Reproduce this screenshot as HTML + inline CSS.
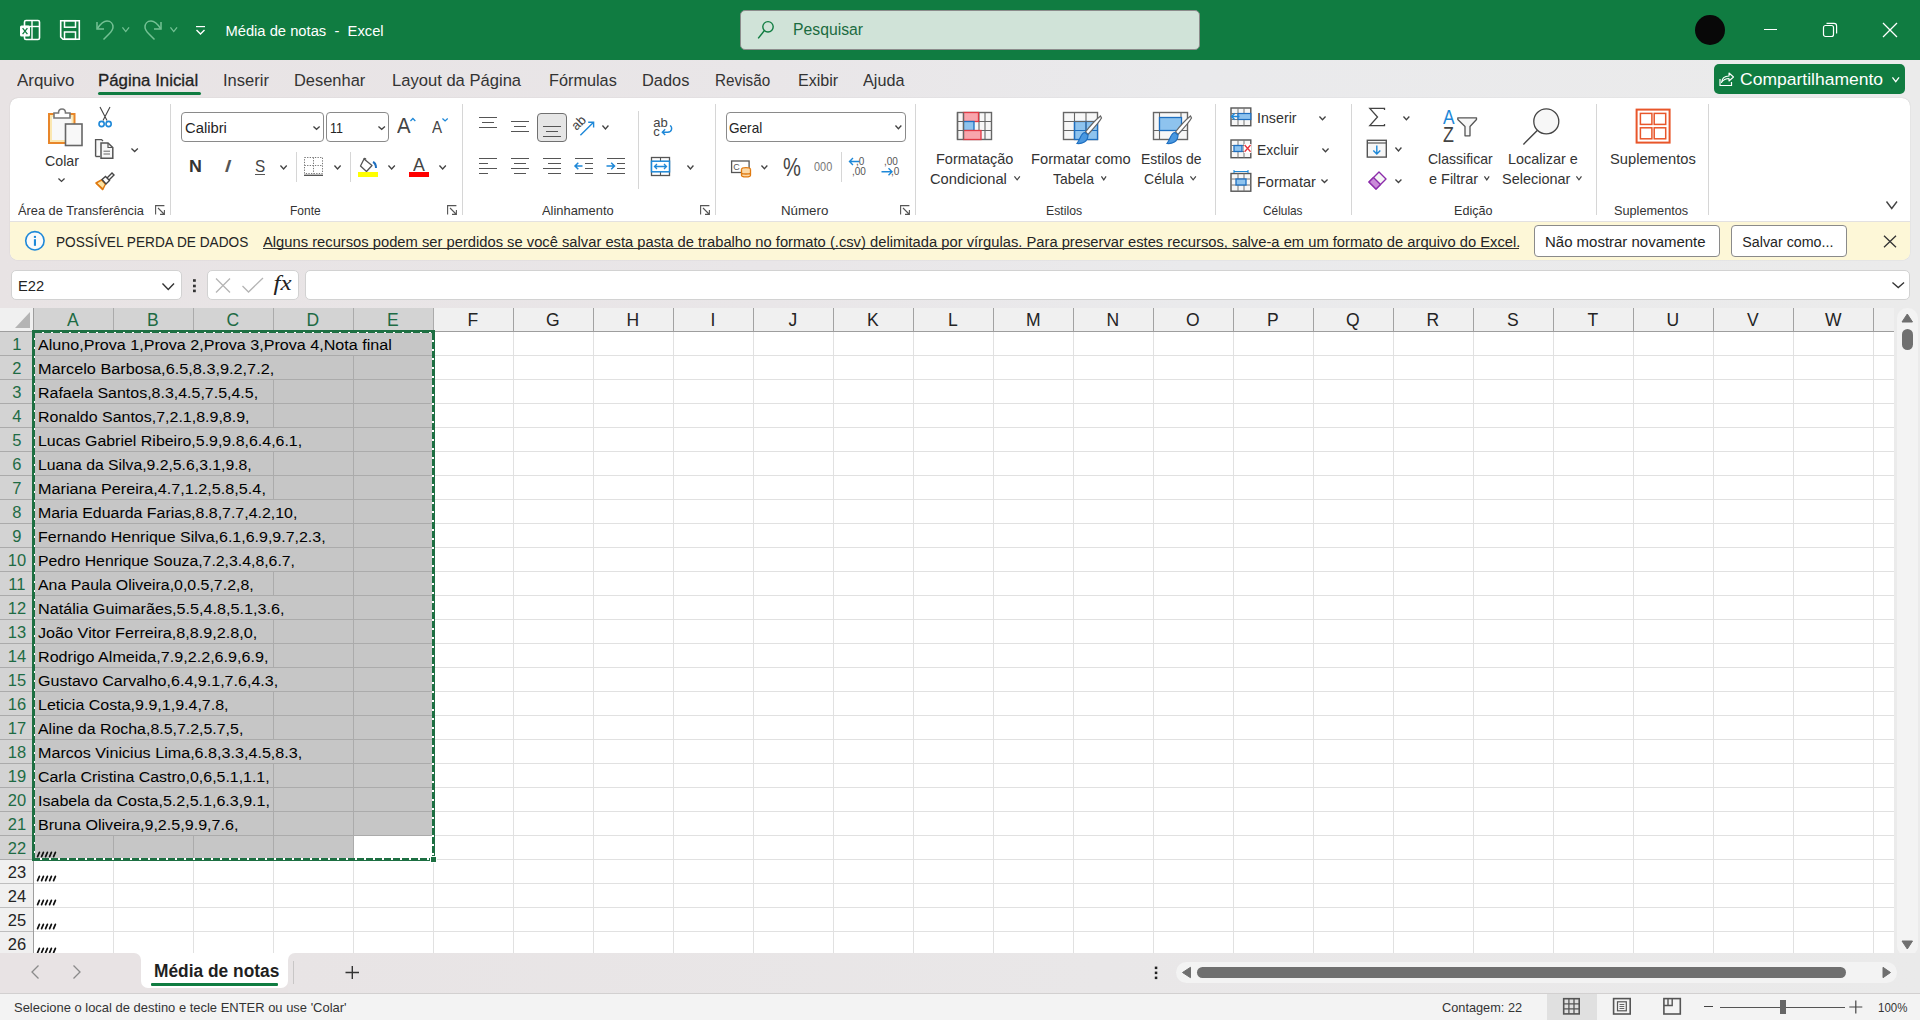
<!DOCTYPE html><html><head><meta charset="utf-8"><style>
html,body{margin:0;padding:0;}
body{width:1920px;height:1020px;overflow:hidden;position:relative;background:linear-gradient(90deg,#E8E3E4 0%,#E9E6E8 40%,#EAEAEC 62%,#EBEBEB 100%);font-family:"Liberation Sans",sans-serif;}
.t{position:absolute;white-space:pre;transform-origin:0 0;}
.r{position:absolute;}
svg.r{overflow:visible;}
</style></head><body>
<div class="r" style="left:0px;top:0px;width:1920px;height:60px;background:#107C41;"></div>
<svg class="r" style="left:18px;top:18px;" width="24" height="24" viewBox="0 0 24 24">
      <rect x="6.5" y="2.5" width="15" height="19" rx="1.5" fill="none" stroke="#fff" stroke-width="1.6"/>
      <line x1="6.5" y1="8.5" x2="21.5" y2="8.5" stroke="#fff" stroke-width="1.4"/>
      <line x1="14" y1="2.5" x2="14" y2="21.5" stroke="#fff" stroke-width="1.4"/>
      <rect x="2" y="7.5" width="10" height="11" rx="1.5" fill="#fff"/>
      <path d="M4.6 10.2 L9.4 16.2 M9.4 10.2 L4.6 16.2" stroke="#107C41" stroke-width="1.3"/>
    </svg>
<svg class="r" style="left:58px;top:18px;" width="24" height="24" viewBox="0 0 24 24">
      <path d="M2.7 2.7 H21.3 V21.3 H5 L2.7 19 Z" fill="none" stroke="#fff" stroke-width="1.6"/>
      <rect x="6.5" y="2.7" width="11" height="6.5" fill="none" stroke="#fff" stroke-width="1.5"/>
      <rect x="6.5" y="14" width="11" height="7.3" fill="none" stroke="#fff" stroke-width="1.5"/>
    </svg>
<svg class="r" style="left:93px;top:18px;" width="24" height="24" viewBox="0 0 24 24">
      <path d="M4 4 V11 H11" fill="none" stroke="#74C194" stroke-width="1.5"/>
      <path d="M4.5 10.5 C8 5 11 3 14 3 C18 3 20 6 20 9 C20 12 18 14 16 16 L10.5 21.5" fill="none" stroke="#74C194" stroke-width="1.5"/>
    </svg>
<svg class="r" style="left:120.45px;top:25px;" width="11.5" height="9" viewBox="0 0 11.5 9"><polyline points="2.455,2.455 5.75,6.545 9.045,2.455" fill="none" stroke="#74C194" stroke-width="1.3"/></svg>
<svg class="r" style="left:141px;top:18px;" width="24" height="24" viewBox="0 0 24 24">
      <path d="M20 4 V11 H13" fill="none" stroke="#74C194" stroke-width="1.5"/>
      <path d="M19.5 10.5 C16 5 13 3 10 3 C6 3 4 6 4 9 C4 12 6 14 8 16 L13.5 21.5" fill="none" stroke="#74C194" stroke-width="1.5"/>
    </svg>
<svg class="r" style="left:168.25px;top:25px;" width="11.5" height="9" viewBox="0 0 11.5 9"><polyline points="2.455,2.455 5.75,6.545 9.045,2.455" fill="none" stroke="#74C194" stroke-width="1.3"/></svg>
<svg class="r" style="left:194px;top:24px;" width="14" height="14" viewBox="0 0 14 14">
      <line x1="2" y1="2.6" x2="11" y2="2.6" stroke="#fff" stroke-width="1.2"/>
      <polyline points="2.5,6 6.5,10 10.5,6" fill="none" stroke="#fff" stroke-width="1.4"/>
    </svg>
<span class="t" style="left:225.40px;top:24px;font-size:14.75px;line-height:14.75px;color:#FFFFFF;">Média de notas  -  Excel</span>
<div class="r" style="left:740px;top:10px;width:460px;height:40px;background:#D0E3D8;border:1px solid #8C8C8C;box-sizing:border-box;border-radius:5px;"></div>
<svg class="r" style="left:755px;top:19px;" width="22" height="22" viewBox="0 0 22 22">
      <circle cx="13" cy="7.8" r="5.2" fill="none" stroke="#107C41" stroke-width="1.4"/>
      <line x1="9.3" y1="11.6" x2="3.2" y2="19.4" stroke="#107C41" stroke-width="1.5"/>
    </svg>
<span class="t" style="left:793.00px;top:21px;font-size:16.25px;line-height:16.25px;color:#1B6B3F;transform:scaleX(0.9692);">Pesquisar</span>
<svg class="r" style="left:1695px;top:15px;" width="30" height="30" viewBox="0 0 30 30"><circle cx="15" cy="15" r="15" fill="#080808"/></svg>
<div class="r" style="left:1763.5px;top:29px;width:13px;height:1.2px;background:#fff;"></div>
<svg class="r" style="left:1820px;top:20px;" width="20" height="20" viewBox="0 0 20 20">
      <rect x="3.5" y="5.5" width="10" height="11" rx="2" fill="none" stroke="#fff" stroke-width="1.2"/>
      <path d="M6.5 3.3 H14 Q16.6 3.3 16.6 6 V13.5" fill="none" stroke="#fff" stroke-width="1.2"/>
    </svg>
<svg class="r" style="left:1880px;top:20px;" width="20" height="20" viewBox="0 0 20 20"><path d="M3 3 L17 17 M17 3 L3 17" stroke="#fff" stroke-width="1.3"/></svg>
<span class="t" style="left:16.50px;top:73px;font-size:16.75px;line-height:16.75px;color:#333333;transform:scaleX(1.0105);">Arquivo</span>
<span class="t" style="left:98.40px;top:73px;font-size:16.75px;line-height:16.75px;color:#1F1F1F;transform:scaleX(1.0060);-webkit-text-stroke:0.3px #1F1F1F;">Página Inicial</span>
<div class="r" style="left:98px;top:92px;width:103px;height:3px;background:#107C41;border-radius:2px;"></div>
<span class="t" style="left:223.40px;top:73px;font-size:16.75px;line-height:16.75px;color:#333333;transform:scaleX(0.9872);">Inserir</span>
<span class="t" style="left:294.40px;top:73px;font-size:16.75px;line-height:16.75px;color:#333333;transform:scaleX(0.9808);">Desenhar</span>
<span class="t" style="left:391.70px;top:73px;font-size:16.75px;line-height:16.75px;color:#333333;transform:scaleX(0.9901);">Layout da Página</span>
<span class="t" style="left:548.75px;top:73px;font-size:16.75px;line-height:16.75px;color:#333333;transform:scaleX(0.9707);">Fórmulas</span>
<span class="t" style="left:641.70px;top:73px;font-size:16.75px;line-height:16.75px;color:#333333;transform:scaleX(0.9771);">Dados</span>
<span class="t" style="left:714.70px;top:73px;font-size:16.75px;line-height:16.75px;color:#333333;transform:scaleX(0.9115);">Revisão</span>
<span class="t" style="left:797.50px;top:73px;font-size:16.75px;line-height:16.75px;color:#333333;transform:scaleX(0.9595);">Exibir</span>
<span class="t" style="left:862.50px;top:73px;font-size:16.75px;line-height:16.75px;color:#333333;transform:scaleX(0.9659);">Ajuda</span>
<div class="r" style="left:1714px;top:64px;width:191px;height:30px;background:#107C41;border-radius:5px;"></div>
<svg class="r" style="left:1717px;top:69px;" width="20" height="20" viewBox="0 0 20 20">
      <path d="M3 10 V16.5 H14.5 V13" fill="none" stroke="#fff" stroke-width="1.2"/>
      <path d="M4.5 13.5 C5 8.5 8 7 12 7 V4 L16.5 8 L12 12 V9.5 C9 9.5 6.5 10.5 4.5 13.5 Z" fill="none" stroke="#fff" stroke-width="1.1" stroke-linejoin="round"/>
    </svg>
<span class="t" style="left:1740.00px;top:71px;font-size:16.25px;line-height:16.25px;color:#FFFFFF;transform:scaleX(1.0774);">Compartilhamento</span>
<svg class="r" style="left:1890.45px;top:74.8px;" width="11.5" height="9.200000000000003" viewBox="0 0 11.5 9.200000000000003"><polyline points="2.455,2.455 5.75,6.745000000000003 9.045,2.455" fill="none" stroke="#fff" stroke-width="1.3"/></svg>
<div class="r" style="left:10px;top:98px;width:1900px;height:162px;background:#FFFFFF;border-radius:8px;box-shadow:0 0 1px rgba(0,0,0,0.25);"></div>
<div class="r" style="left:10px;top:221px;width:1900px;height:1px;background:#E3E1E1;"></div>
<div class="r" style="left:10px;top:222px;width:1900px;height:38px;background:#FDF7D7;border-radius:0 0 8px 8px;"></div>
<svg class="r" style="left:46px;top:106px;" width="38" height="42" viewBox="0 0 38 42">
      <rect x="3" y="8" width="25.5" height="29" fill="#FBE7B0" stroke="#E8862A" stroke-width="2"/>
      <rect x="6" y="11" width="19.5" height="23" fill="#F8F8F8"/>
      <path d="M8 12 V7 H12.5 Q12.5 3 16 3 Q19.5 3 19.5 7 H24 V12 Z" fill="#fff" stroke="#777" stroke-width="1.6"/>
      <rect x="19.5" y="18" width="16.5" height="21.5" fill="#F8F8F8" stroke="#666" stroke-width="1.6"/>
    </svg>
<span class="t" style="left:44.50px;top:154px;font-size:14.5px;line-height:14.5px;color:#333333;transform:scaleX(0.9800);">Colar</span>
<svg class="r" style="left:56.0px;top:175.5px;" width="11" height="7.900000000000006" viewBox="0 0 11 7.900000000000006"><polyline points="2.455,2.455 5.5,5.445000000000006 8.545,2.455" fill="none" stroke="#424242" stroke-width="1.3"/></svg>
<svg class="r" style="left:96px;top:105px;" width="18" height="24" viewBox="0 0 18 24">
      <path d="M4 2 L11 15.5 M14 2 L7 15.5" stroke="#444" stroke-width="1.1"/>
      <circle cx="5.6" cy="19" r="2.6" fill="none" stroke="#1E88D8" stroke-width="1.6"/>
      <circle cx="12.6" cy="19" r="2.6" fill="none" stroke="#1E88D8" stroke-width="1.6"/>
    </svg>
<svg class="r" style="left:93px;top:137px;" width="24" height="24" viewBox="0 0 24 24">
      <path d="M2.6 19.5 V2.6 H8.5 L10 4" fill="#F7F7F7" stroke="#555" stroke-width="1.4"/>
      <path d="M2.6 19.5 H7" stroke="#555" stroke-width="1.4"/>
      <path d="M8 6 H15 L19.8 10.5 V21.3 H8 Z" fill="#F7F7F7" stroke="#555" stroke-width="1.5"/>
      <path d="M15 6 V10.5 H19.8" fill="none" stroke="#555" stroke-width="1.2"/>
      <path d="M10.5 14.2 H17 M10.5 17 H17" stroke="#666" stroke-width="1"/>
    </svg>
<svg class="r" style="left:128.85px;top:145.5px;" width="11.3" height="8.0" viewBox="0 0 11.3 8.0"><polyline points="2.455,2.455 5.65,5.545 8.845,2.455" fill="none" stroke="#424242" stroke-width="1.3"/></svg>
<svg class="r" style="left:93px;top:169px;" width="24" height="24" viewBox="0 0 24 24">
      <path d="M3 14 L10 20 L12.5 15 L8.5 11 Z" fill="#FCE3A3" stroke="#E07A10" stroke-width="1.5" stroke-linejoin="round"/>
      <path d="M3 14 L10 21" stroke="#E07A10" stroke-width="1.5"/>
      <path d="M9 10.5 L12.5 7.5 L16.5 11.5 L13 15 Z" fill="#fff" stroke="#444" stroke-width="1.4"/>
      <path d="M14 9 L19 4 L21 6 L16 11" fill="none" stroke="#444" stroke-width="1.4"/>
    </svg>
<div class="r" style="left:170px;top:104px;width:1px;height:111px;background:#D6D6D6;"></div>
<span class="t" style="left:18.00px;top:205px;font-size:12.75px;line-height:12.75px;color:#333333;transform:scaleX(1.0040);">Área de Transferência</span>
<svg class="r" style="left:155px;top:205px;" width="11" height="10" viewBox="0 0 11 10">
      <path d="M0.6 9.4 V0.6 H9.4" fill="none" stroke="#555" stroke-width="1.1"/>
      <path d="M3 3 L9.5 9.5 M5 9.4 H9.4 V5" fill="none" stroke="#555" stroke-width="1.1"/>
    </svg>
<div class="r" style="left:181px;top:112px;width:143px;height:30px;background:#fff;border:1px solid #8A8A8A;box-sizing:border-box;border-radius:4px;"></div>
<span class="t" style="left:184.60px;top:120px;font-size:15.25px;line-height:15.25px;color:#242424;transform:scaleX(0.9686);">Calibri</span>
<svg class="r" style="left:310.95px;top:123.8px;" width="11.1" height="7.799999999999997" viewBox="0 0 11.1 7.799999999999997"><polyline points="2.455,2.455 5.55,5.344999999999997 8.645,2.455" fill="none" stroke="#424242" stroke-width="1.3"/></svg>
<div class="r" style="left:326px;top:112px;width:63px;height:30px;background:#fff;border:1px solid #8A8A8A;box-sizing:border-box;border-radius:4px;"></div>
<span class="t" style="left:330.20px;top:120px;font-size:15.25px;line-height:15.25px;color:#242424;transform:scaleX(0.8188);">11</span>
<svg class="r" style="left:375.6px;top:123.8px;" width="11.4" height="7.799999999999997" viewBox="0 0 11.4 7.799999999999997"><polyline points="2.455,2.455 5.7,5.344999999999997 8.945,2.455" fill="none" stroke="#424242" stroke-width="1.3"/></svg>
<span class="t" style="left:397.30px;top:116px;font-size:21.25px;line-height:21.25px;color:#444;transform:scaleX(0.9571);">A</span>
<svg class="r" style="left:408.40000000000003px;top:116.4px;" width="9.8" height="7.3999999999999915" viewBox="0 0 9.8 7.3999999999999915"><polyline points="2.455,4.944999999999991 4.9,2.455 7.345,4.944999999999991" fill="none" stroke="#1E88D8" stroke-width="1.3"/></svg>
<span class="t" style="left:431.60px;top:119px;font-size:16.25px;line-height:16.25px;color:#444;transform:scaleX(0.9273);">A</span>
<svg class="r" style="left:439.79999999999995px;top:116.4px;" width="10.2" height="7.3999999999999915" viewBox="0 0 10.2 7.3999999999999915"><polyline points="2.455,2.455 5.1,4.944999999999991 7.744999999999999,2.455" fill="none" stroke="#1E88D8" stroke-width="1.3"/></svg>
<span class="t" style="left:189.00px;top:158px;font-size:17.0px;line-height:17.0px;color:#333;font-weight:bold;transform:scaleX(1.0500);">N</span>
<span class="t" style="left:223.75px;top:158px;font-size:17.0px;line-height:17.0px;color:#555;transform:scaleX(1.6100);font-style:italic;font-family:"Liberation Serif",serif;">I</span>
<span class="t" style="left:255.00px;top:158px;font-size:17.0px;line-height:17.0px;color:#444;transform:scaleX(0.9000);">S</span>
<div class="r" style="left:255px;top:173.5px;width:10px;height:1.3px;background:#555;"></div>
<svg class="r" style="left:278.0px;top:162.8px;" width="11.2" height="8.399999999999977" viewBox="0 0 11.2 8.399999999999977"><polyline points="2.455,2.455 5.6,5.944999999999977 8.745,2.455" fill="none" stroke="#424242" stroke-width="1.3"/></svg>
<div class="r" style="left:296px;top:152px;width:1px;height:30px;background:#D6D6D6;"></div>
<svg class="r" style="left:303px;top:156px;" width="21" height="21" viewBox="0 0 21 21">
      <rect x="1.5" y="1.5" width="18" height="16" fill="none" stroke="#777" stroke-width="1" stroke-dasharray="1.3 1.3"/>
      <path d="M10.5 1.5 V17.5 M1.5 9.5 H19.5" stroke="#777" stroke-width="1" stroke-dasharray="1.3 1.3"/>
      <line x1="1" y1="19.3" x2="20" y2="19.3" stroke="#555" stroke-width="1.4"/>
    </svg>
<svg class="r" style="left:331.95px;top:162.8px;" width="11.1" height="8.399999999999977" viewBox="0 0 11.1 8.399999999999977"><polyline points="2.455,2.455 5.55,5.944999999999977 8.645,2.455" fill="none" stroke="#424242" stroke-width="1.3"/></svg>
<div class="r" style="left:350px;top:152px;width:1px;height:30px;background:#D6D6D6;"></div>
<svg class="r" style="left:358px;top:156.5px;" width="22" height="17" viewBox="0 0 22 17">
      <path d="M6 2 L14 8.5 L8.5 14.5 L2.5 9 Z" fill="none" stroke="#555" stroke-width="1.3" stroke-linejoin="round"/>
      <path d="M6 2 C6 1 7.5 1 8 2.5" fill="none" stroke="#555" stroke-width="1.2"/>
      <path d="M15 5 C17 6 18 8 18 11" fill="none" stroke="#1E6FC0" stroke-width="2"/>
    </svg>
<div class="r" style="left:358px;top:172px;width:20px;height:5px;background:#FFFF00;"></div>
<svg class="r" style="left:385.75px;top:162.8px;" width="11.3" height="8.399999999999977" viewBox="0 0 11.3 8.399999999999977"><polyline points="2.455,2.455 5.65,5.944999999999977 8.845,2.455" fill="none" stroke="#424242" stroke-width="1.3"/></svg>
<span class="t" style="left:413.30px;top:156px;font-size:18.25px;line-height:18.25px;color:#444;transform:scaleX(0.9750);">A</span>
<div class="r" style="left:409px;top:172px;width:20px;height:5px;background:#FF0000;"></div>
<svg class="r" style="left:436.85px;top:162.8px;" width="11.3" height="8.399999999999977" viewBox="0 0 11.3 8.399999999999977"><polyline points="2.455,2.455 5.65,5.944999999999977 8.845,2.455" fill="none" stroke="#424242" stroke-width="1.3"/></svg>
<span class="t" style="left:290.00px;top:205px;font-size:12.75px;line-height:12.75px;color:#333333;transform:scaleX(0.9394);">Fonte</span>
<svg class="r" style="left:447px;top:205px;" width="11" height="10" viewBox="0 0 11 10">
      <path d="M0.6 9.4 V0.6 H9.4" fill="none" stroke="#555" stroke-width="1.1"/>
      <path d="M3 3 L9.5 9.5 M5 9.4 H9.4 V5" fill="none" stroke="#555" stroke-width="1.1"/>
    </svg>
<div class="r" style="left:462px;top:104px;width:1px;height:111px;background:#D6D6D6;"></div>
<div class="r" style="left:479px;top:116.9px;width:18px;height:1.3px;background:#555555;"></div>
<div class="r" style="left:482px;top:121.9px;width:12px;height:1.3px;background:#555555;"></div>
<div class="r" style="left:479px;top:126.9px;width:18px;height:1.3px;background:#555555;"></div>
<div class="r" style="left:511px;top:120.65px;width:18px;height:1.3px;background:#555555;"></div>
<div class="r" style="left:514px;top:125.65px;width:12px;height:1.3px;background:#555555;"></div>
<div class="r" style="left:511px;top:130.65px;width:18px;height:1.3px;background:#555555;"></div>
<div class="r" style="left:537px;top:112.5px;width:30px;height:29px;background:#E6E6E6;border:1px solid #707070;box-sizing:border-box;border-radius:4px;"></div>
<div class="r" style="left:543px;top:125.65px;width:18px;height:1.3px;background:#555555;"></div>
<div class="r" style="left:546px;top:130.65px;width:12px;height:1.3px;background:#555555;"></div>
<div class="r" style="left:543px;top:135.65px;width:18px;height:1.3px;background:#555555;"></div>
<svg class="r" style="left:572px;top:114px;" width="24" height="24" viewBox="0 0 24 24">
      <text x="0" y="0" font-family="Liberation Sans" font-size="13" fill="#444" transform="translate(4.6,17) rotate(-45)">ab</text>
      <path d="M8.4 21.3 L21.3 8.5 M16.2 8.3 H21.6 V13.6" fill="none" stroke="#1E88D8" stroke-width="1.4"/>
    </svg>
<svg class="r" style="left:599.8499999999999px;top:123px;" width="10.9" height="8.400000000000006" viewBox="0 0 10.9 8.400000000000006"><polyline points="2.455,2.455 5.45,5.945000000000006 8.445,2.455" fill="none" stroke="#424242" stroke-width="1.3"/></svg>
<div class="r" style="left:638px;top:111px;width:1px;height:78px;background:#D6D6D6;"></div>
<svg class="r" style="left:652px;top:114px;" width="22" height="24" viewBox="0 0 22 24">
      <text x="1.3" y="13" font-family="Liberation Sans" font-size="13" fill="#444">ab</text>
      <text x="1.3" y="22" font-family="Liberation Sans" font-size="13" fill="#444">c</text>
      <path d="M18 11.5 C20.5 13 20.5 18.2 15.5 18.2 H10.3 M13.2 15.3 L10.3 18.2 L13.2 21.1" fill="none" stroke="#1E88D8" stroke-width="1.4"/>
    </svg>
<div class="r" style="left:479px;top:158.15px;width:18px;height:1.3px;background:#555555;"></div>
<div class="r" style="left:479px;top:163.15px;width:9px;height:1.3px;background:#555555;"></div>
<div class="r" style="left:479px;top:168.15px;width:18px;height:1.3px;background:#555555;"></div>
<div class="r" style="left:479px;top:173.15px;width:9px;height:1.3px;background:#555555;"></div>
<div class="r" style="left:511px;top:158.15px;width:18px;height:1.3px;background:#555555;"></div>
<div class="r" style="left:514px;top:163.15px;width:12px;height:1.3px;background:#555555;"></div>
<div class="r" style="left:511px;top:168.15px;width:18px;height:1.3px;background:#555555;"></div>
<div class="r" style="left:514px;top:173.15px;width:12px;height:1.3px;background:#555555;"></div>
<div class="r" style="left:543px;top:158.15px;width:18px;height:1.3px;background:#555555;"></div>
<div class="r" style="left:548px;top:163.15px;width:13px;height:1.3px;background:#555555;"></div>
<div class="r" style="left:543px;top:168.15px;width:18px;height:1.3px;background:#555555;"></div>
<div class="r" style="left:548px;top:173.15px;width:13px;height:1.3px;background:#555555;"></div>
<div class="r" style="left:575px;top:158.15px;width:18px;height:1.3px;background:#555555;"></div>
<div class="r" style="left:585px;top:163.15px;width:8px;height:1.3px;background:#555555;"></div>
<div class="r" style="left:585px;top:168.15px;width:8px;height:1.3px;background:#555555;"></div>
<div class="r" style="left:575px;top:173.15px;width:18px;height:1.3px;background:#555555;"></div>
<div class="r" style="left:607px;top:158.15px;width:18px;height:1.3px;background:#555555;"></div>
<div class="r" style="left:617px;top:163.15px;width:8px;height:1.3px;background:#555555;"></div>
<div class="r" style="left:617px;top:168.15px;width:8px;height:1.3px;background:#555555;"></div>
<div class="r" style="left:607px;top:173.15px;width:18px;height:1.3px;background:#555555;"></div>
<svg class="r" style="left:574px;top:162px;" width="10" height="8" viewBox="0 0 10 8"><path d="M1 4 H8.5 M4.3 0.8 L1 4 L4.3 7.2" fill="none" stroke="#1E88D8" stroke-width="1.5"/></svg>
<svg class="r" style="left:606px;top:162px;" width="10" height="8" viewBox="0 0 10 8"><path d="M0.5 4 H8.5 M5.2 0.8 L8.5 4 L5.2 7.2" fill="none" stroke="#1E88D8" stroke-width="1.5"/></svg>
<svg class="r" style="left:650px;top:156px;" width="21" height="21" viewBox="0 0 21 21">
      <rect x="1.5" y="1.5" width="18" height="18" fill="none" stroke="#555" stroke-width="1.3"/>
      <path d="M10.5 1.5 V5 M10.5 16 V19.5" stroke="#555" stroke-width="1.1"/>
      <rect x="1.5" y="5.2" width="18" height="10.6" fill="#fff" stroke="#1E88D8" stroke-width="1.5"/>
      <path d="M4.5 10.5 H16.5 M7 8 L4.5 10.5 L7 13 M14 8 L16.5 10.5 L14 13" fill="none" stroke="#1E88D8" stroke-width="1.3"/>
    </svg>
<svg class="r" style="left:684.8499999999999px;top:163px;" width="10.9" height="8.400000000000006" viewBox="0 0 10.9 8.400000000000006"><polyline points="2.455,2.455 5.45,5.945000000000006 8.445,2.455" fill="none" stroke="#424242" stroke-width="1.3"/></svg>
<span class="t" style="left:542.00px;top:205px;font-size:12.75px;line-height:12.75px;color:#333333;transform:scaleX(1.0106);">Alinhamento</span>
<svg class="r" style="left:700px;top:205px;" width="11" height="10" viewBox="0 0 11 10">
      <path d="M0.6 9.4 V0.6 H9.4" fill="none" stroke="#555" stroke-width="1.1"/>
      <path d="M3 3 L9.5 9.5 M5 9.4 H9.4 V5" fill="none" stroke="#555" stroke-width="1.1"/>
    </svg>
<div class="r" style="left:715px;top:104px;width:1px;height:111px;background:#D6D6D6;"></div>
<div class="r" style="left:726px;top:112px;width:180px;height:30px;background:#fff;border:1px solid #8A8A8A;box-sizing:border-box;border-radius:4px;"></div>
<span class="t" style="left:729.40px;top:120px;font-size:15.0px;line-height:15.0px;color:#242424;transform:scaleX(0.9054);">Geral</span>
<svg class="r" style="left:893.0px;top:123.3px;" width="10.8" height="8.200000000000003" viewBox="0 0 10.8 8.200000000000003"><polyline points="2.455,2.455 5.4,5.745000000000003 8.345,2.455" fill="none" stroke="#424242" stroke-width="1.3"/></svg>
<svg class="r" style="left:729px;top:158px;" width="26" height="21" viewBox="0 0 26 21">
      <rect x="2.6" y="3" width="17.5" height="11.5" fill="none" stroke="#555" stroke-width="1.3"/>
      <text x="4.3" y="12" font-family="Liberation Sans" font-size="9" fill="#555">C</text>
      <rect x="12" y="9.5" width="10" height="9.5" rx="4" fill="#fff"/>
      <ellipse cx="17" cy="11.5" rx="4.5" ry="1.8" fill="#FBD9A8" stroke="#E07A10" stroke-width="1.3"/>
      <path d="M12.5 11.5 V17.2 C12.5 19.5 21.5 19.5 21.5 17.2 V11.5 M12.5 14.4 C12.5 16.5 21.5 16.5 21.5 14.4" fill="#FBD9A8" stroke="#E07A10" stroke-width="1.3"/>
    </svg>
<svg class="r" style="left:759.1px;top:163.4px;" width="10.8" height="8.199999999999989" viewBox="0 0 10.8 8.199999999999989"><polyline points="2.455,2.455 5.4,5.744999999999989 8.345,2.455" fill="none" stroke="#424242" stroke-width="1.3"/></svg>
<span class="t" style="left:783.00px;top:155px;font-size:25.0px;line-height:25.0px;color:#444;transform:scaleX(0.8045);">%</span>
<span class="t" style="left:814.30px;top:161px;font-size:12.25px;line-height:12.25px;color:#777;transform:scaleX(0.8905);">000</span>
<div class="r" style="left:841px;top:152px;width:1px;height:30px;background:#D6D6D6;"></div>
<svg class="r" style="left:847px;top:155px;" width="24" height="23" viewBox="0 0 24 23">
      <text x="9" y="9.8" font-family="Liberation Sans" font-size="10" fill="#555">,0</text>
      <text x="5" y="20.3" font-family="Liberation Sans" font-size="10" fill="#555">,00</text>
      <path d="M2.5 6.5 H12.5 M6 3 L2.5 6.5 L6 10" fill="none" stroke="#1E88D8" stroke-width="1.4"/>
    </svg>
<svg class="r" style="left:879px;top:155px;" width="24" height="23" viewBox="0 0 24 23">
      <text x="5" y="9.8" font-family="Liberation Sans" font-size="10" fill="#555">,00</text>
      <text x="12" y="20.3" font-family="Liberation Sans" font-size="10" fill="#555">,0</text>
      <path d="M2.5 16.8 H13 M9.5 13.3 L13 16.8 L9.5 20.3" fill="none" stroke="#1E88D8" stroke-width="1.4"/>
    </svg>
<span class="t" style="left:781.00px;top:205px;font-size:12.75px;line-height:12.75px;color:#333333;transform:scaleX(1.0444);">Número</span>
<svg class="r" style="left:900px;top:205px;" width="11" height="10" viewBox="0 0 11 10">
      <path d="M0.6 9.4 V0.6 H9.4" fill="none" stroke="#555" stroke-width="1.1"/>
      <path d="M3 3 L9.5 9.5 M5 9.4 H9.4 V5" fill="none" stroke="#555" stroke-width="1.1"/>
    </svg>
<div class="r" style="left:915px;top:104px;width:1px;height:111px;background:#D6D6D6;"></div>
<svg class="r" style="left:956px;top:111px;" width="38" height="30" viewBox="0 0 38 30">
      <rect x="1.5" y="1.5" width="34" height="27" fill="#F7F7F7" stroke="#666" stroke-width="1.4"/>
      <path d="M1.5 10.5 H35.5 M1.5 19.5 H35.5 M23 1.5 V28.5 M29 1.5 V28.5" stroke="#666" stroke-width="1.1"/>
      <rect x="7.5" y="1.5" width="15" height="9" fill="#F8A5AC" stroke="#E03A45" stroke-width="1.3"/>
      <rect x="7.5" y="10.5" width="10.5" height="9" fill="#8EC3EE" stroke="#1E6FC0" stroke-width="1.3"/>
      <rect x="7.5" y="19.5" width="17.5" height="9" fill="#F8A5AC" stroke="#E03A45" stroke-width="1.3"/>
      <path d="M1.5 1.5 V28.5 M7.5 1.5 V28.5" stroke="#666" stroke-width="1.3"/>
    </svg>
<span class="t" style="left:936.40px;top:153px;font-size:13.75px;line-height:13.75px;color:#333333;transform:scaleX(1.0554);">Formatação</span>
<span class="t" style="left:929.70px;top:173px;font-size:13.75px;line-height:13.75px;color:#333333;transform:scaleX(1.0694);">Condicional</span>
<svg class="r" style="left:1011.75px;top:174.25px;" width="10.3" height="8.25" viewBox="0 0 10.3 8.25"><polyline points="2.42,2.42 5.15,5.83 7.880000000000001,2.42" fill="none" stroke="#424242" stroke-width="1.2"/></svg>
<svg class="r" style="left:1062px;top:111px;" width="42" height="36" viewBox="0 0 42 36">
      <rect x="1.5" y="1.5" width="34" height="27" fill="#F7F7F7" stroke="#666" stroke-width="1.4"/>
      <rect x="12.5" y="10.5" width="23" height="18" fill="#8EC3EE" stroke="#1E6FC0" stroke-width="1.3"/>
      <path d="M1.5 10.5 H35.5 M1.5 19.5 H35.5 M12.5 1.5 V28.5 M24 1.5 V28.5" stroke="#666" stroke-width="1.1"/>
      <path d="M12.5 10.5 V28.5 M24 10.5 V28.5 M12.5 19.5 H35.5" stroke="#1E6FC0" stroke-width="1.2"/>
      <path d="M38.5 5 C36 7 28 15 23.5 21 L26 23.5 C31 18 38 10 39.5 7 Z" fill="#fff" stroke="#666" stroke-width="1.2"/>
      <path d="M23 21.5 C19 21.5 19 27 15 32.5 C20 33 26 31 26 24 Z" fill="#4A98E0" stroke="#1E6FC0" stroke-width="1.2"/>
    </svg>
<span class="t" style="left:1030.60px;top:153px;font-size:13.75px;line-height:13.75px;color:#333333;transform:scaleX(1.0707);">Formatar como</span>
<span class="t" style="left:1052.80px;top:173px;font-size:13.75px;line-height:13.75px;color:#333333;transform:scaleX(1.0098);">Tabela</span>
<svg class="r" style="left:1099.25px;top:174.25px;" width="9.5" height="8.25" viewBox="0 0 9.5 8.25"><polyline points="2.42,2.42 4.75,5.83 7.08,2.42" fill="none" stroke="#424242" stroke-width="1.2"/></svg>
<svg class="r" style="left:1152px;top:111px;" width="42" height="36" viewBox="0 0 42 36">
      <rect x="1.5" y="1.5" width="34" height="27" fill="#F7F7F7" stroke="#666" stroke-width="1.4"/>
      <path d="M1.5 19.5 H35.5 M7.5 1.5 V28.5 M29 1.5 V10" stroke="#666" stroke-width="1.1"/>
      <rect x="7.5" y="6.5" width="22" height="13" fill="#8EC3EE" stroke="#1E6FC0" stroke-width="1.3"/>
      <path d="M38.5 5 C36 7 28 15 23.5 21 L26 23.5 C31 18 38 10 39.5 7 Z" fill="#fff" stroke="#666" stroke-width="1.2"/>
      <path d="M23 21.5 C19 21.5 19 27 15 32.5 C20 33 26 31 26 24 Z" fill="#4A98E0" stroke="#1E6FC0" stroke-width="1.2"/>
    </svg>
<span class="t" style="left:1141.00px;top:153px;font-size:13.75px;line-height:13.75px;color:#333333;transform:scaleX(1.0167);">Estilos de</span>
<span class="t" style="left:1144.20px;top:173px;font-size:13.75px;line-height:13.75px;color:#333333;transform:scaleX(1.0205);">Célula</span>
<svg class="r" style="left:1188.25px;top:174.25px;" width="10.3" height="8.25" viewBox="0 0 10.3 8.25"><polyline points="2.42,2.42 5.15,5.83 7.880000000000001,2.42" fill="none" stroke="#424242" stroke-width="1.2"/></svg>
<span class="t" style="left:1046.00px;top:205px;font-size:12.75px;line-height:12.75px;color:#333333;transform:scaleX(0.9605);">Estilos</span>
<div class="r" style="left:1215px;top:104px;width:1px;height:111px;background:#D6D6D6;"></div>
<svg class="r" style="left:1230px;top:107px;" width="22" height="20" viewBox="0 0 22 20">
      <rect x="1" y="1" width="19.8" height="17.7" fill="#F7F7F7" stroke="#555" stroke-width="1.4"/>
      <path d="M1 6.5 H20.8 M1 12.5 H20.8 M8 1 V18.7 M14 1 V18.7" stroke="#777" stroke-width="1"/>
      <rect x="8" y="6.5" width="12.8" height="6" fill="#8EC3EE" stroke="#1E6FC0" stroke-width="1.2"/>
      <path d="M1.5 9.5 H9.5 M4.8 6.2 L1.5 9.5 L4.8 12.8" fill="none" stroke="#1E88D8" stroke-width="1.5"/>
    </svg>
<span class="t" style="left:1256.70px;top:110px;font-size:15.25px;line-height:15.25px;color:#333333;transform:scaleX(0.9333);">Inserir</span>
<svg class="r" style="left:1317.0px;top:113.5px;" width="11" height="8.200000000000003" viewBox="0 0 11 8.200000000000003"><polyline points="2.455,2.455 5.5,5.745000000000003 8.545,2.455" fill="none" stroke="#424242" stroke-width="1.3"/></svg>
<svg class="r" style="left:1230px;top:139px;" width="22" height="20" viewBox="0 0 22 20">
      <rect x="1" y="1" width="19.8" height="17.7" fill="#F7F7F7" stroke="#555" stroke-width="1.4"/>
      <path d="M1 6.5 H20.8 M1 12.5 H20.8 M8 1 V18.7 M14 1 V18.7" stroke="#777" stroke-width="1"/>
      <rect x="4" y="6.5" width="8" height="6" fill="#8EC3EE" stroke="#1E6FC0" stroke-width="1.3"/>
      <rect x="14" y="5" width="7.5" height="9" fill="#fff"/>
      <path d="M14.6 6 L20.6 12.8 M20.6 6 L14.6 12.8" stroke="#E8323C" stroke-width="1.3"/>
    </svg>
<span class="t" style="left:1256.90px;top:142px;font-size:15.25px;line-height:15.25px;color:#333333;transform:scaleX(0.9109);">Excluir</span>
<svg class="r" style="left:1319.9px;top:145.6px;" width="11" height="8.200000000000017" viewBox="0 0 11 8.200000000000017"><polyline points="2.455,2.455 5.5,5.745000000000017 8.545,2.455" fill="none" stroke="#424242" stroke-width="1.3"/></svg>
<svg class="r" style="left:1230px;top:170px;" width="22" height="22" viewBox="0 0 22 22">
      <rect x="1" y="3.5" width="19.8" height="17.7" fill="#F7F7F7" stroke="#555" stroke-width="1.4"/>
      <path d="M1 9 H20.8 M1 15 H20.8 M8 3.5 V21.2 M14 3.5 V21.2" stroke="#777" stroke-width="1"/>
      <rect x="6" y="9" width="10" height="6" fill="#8EC3EE" stroke="#1E6FC0" stroke-width="1.3"/>
      <path d="M4 1.5 H18 M4 0 V3 M18 0 V3" stroke="#1E88D8" stroke-width="1.1"/>
    </svg>
<span class="t" style="left:1256.70px;top:174px;font-size:15.0px;line-height:15.0px;color:#333333;transform:scaleX(0.9672);">Formatar</span>
<svg class="r" style="left:1318.7px;top:177px;" width="11" height="8" viewBox="0 0 11 8"><polyline points="2.455,2.455 5.5,5.545 8.545,2.455" fill="none" stroke="#424242" stroke-width="1.3"/></svg>
<span class="t" style="left:1262.50px;top:205px;font-size:12.75px;line-height:12.75px;color:#333333;transform:scaleX(0.9302);">Células</span>
<div class="r" style="left:1351px;top:104px;width:1px;height:111px;background:#D6D6D6;"></div>
<svg class="r" style="left:1367px;top:106px;" width="20" height="22" viewBox="0 0 20 22"><path d="M17.5 4 V2.4 H2.8 L10.5 11 L2.8 19.6 H17.5 V18" fill="none" stroke="#444" stroke-width="1.3"/></svg>
<svg class="r" style="left:1400.8px;top:113.5px;" width="10.8" height="8.200000000000003" viewBox="0 0 10.8 8.200000000000003"><polyline points="2.455,2.455 5.4,5.745000000000003 8.345,2.455" fill="none" stroke="#424242" stroke-width="1.3"/></svg>
<svg class="r" style="left:1366px;top:139px;" width="22" height="20" viewBox="0 0 22 20">
      <rect x="1.3" y="1.3" width="19" height="16.8" fill="#F7F7F7" stroke="#555" stroke-width="1.4"/>
      <path d="M1.3 4 H20.3" stroke="#555" stroke-width="1.2"/>
      <path d="M10.8 6.5 V15 M7.3 11.5 L10.8 15 L14.3 11.5" fill="none" stroke="#1E88D8" stroke-width="1.4"/>
    </svg>
<svg class="r" style="left:1392.75px;top:145.2px;" width="10.9" height="8.400000000000006" viewBox="0 0 10.9 8.400000000000006"><polyline points="2.455,2.455 5.45,5.945000000000006 8.445,2.455" fill="none" stroke="#424242" stroke-width="1.3"/></svg>
<svg class="r" style="left:1366px;top:170px;" width="22" height="22" viewBox="0 0 22 22">
      <path d="M13 2 L20 9 L10 19 L3 12 Z" fill="#F5F5F5" stroke="#8B2BAA" stroke-width="1.4" stroke-linejoin="round"/>
      <path d="M7.5 7.5 L14.5 14.5 L10 19 L3 12 Z" fill="#C98AD8" stroke="#8B2BAA" stroke-width="1.4" stroke-linejoin="round"/>
    </svg>
<svg class="r" style="left:1392.75px;top:177px;" width="10.9" height="8" viewBox="0 0 10.9 8"><polyline points="2.455,2.455 5.45,5.545 8.445,2.455" fill="none" stroke="#424242" stroke-width="1.3"/></svg>
<span class="t" style="left:1442.70px;top:107px;font-size:20.25px;line-height:20.25px;color:#1E88D8;transform:scaleX(0.8571);">A</span>
<span class="t" style="left:1442.70px;top:125px;font-size:21.25px;line-height:21.25px;color:#444;transform:scaleX(0.8385);">Z</span>
<svg class="r" style="left:1456px;top:116px;" width="24" height="23" viewBox="0 0 24 23"><path d="M1.8 1.8 H20.5 V3.5 L14 10.5 V19.8 H9 V10.5 L1.8 3.5 Z" fill="#F7F7F7" stroke="#555" stroke-width="1.3" stroke-linejoin="round"/></svg>
<span class="t" style="left:1427.50px;top:153px;font-size:13.75px;line-height:13.75px;color:#333333;transform:scaleX(1.0188);">Classificar</span>
<span class="t" style="left:1428.60px;top:173px;font-size:13.75px;line-height:13.75px;color:#333333;transform:scaleX(1.0511);">e Filtrar</span>
<svg class="r" style="left:1482.4px;top:174.25px;" width="9.6" height="8.25" viewBox="0 0 9.6 8.25"><polyline points="2.42,2.42 4.8,5.83 7.18,2.42" fill="none" stroke="#424242" stroke-width="1.2"/></svg>
<svg class="r" style="left:1521px;top:106px;" width="42" height="42" viewBox="0 0 42 42">
      <circle cx="25.3" cy="15.4" r="12.5" fill="#F7F7F7" stroke="#444" stroke-width="1.3"/>
      <line x1="16.5" y1="24.3" x2="2.4" y2="38.4" stroke="#444" stroke-width="1.4"/>
    </svg>
<span class="t" style="left:1507.50px;top:153px;font-size:13.75px;line-height:13.75px;color:#333333;transform:scaleX(1.0493);">Localizar e</span>
<span class="t" style="left:1501.60px;top:173px;font-size:13.75px;line-height:13.75px;color:#333333;transform:scaleX(1.0523);">Selecionar</span>
<svg class="r" style="left:1574.25px;top:174.25px;" width="9.9" height="8.25" viewBox="0 0 9.9 8.25"><polyline points="2.42,2.42 4.95,5.83 7.48,2.42" fill="none" stroke="#424242" stroke-width="1.2"/></svg>
<span class="t" style="left:1454.00px;top:205px;font-size:12.75px;line-height:12.75px;color:#333333;transform:scaleX(0.9872);">Edição</span>
<div class="r" style="left:1596px;top:104px;width:1px;height:111px;background:#D6D6D6;"></div>
<svg class="r" style="left:1634px;top:107px;" width="38" height="38" viewBox="0 0 38 38">
      <rect x="2.6" y="2.6" width="33" height="33" fill="none" stroke="#E8562A" stroke-width="2"/>
      <rect x="6.4" y="6.4" width="11.5" height="11" fill="none" stroke="#E8562A" stroke-width="1.5"/>
      <rect x="20.2" y="6.4" width="11.5" height="11" fill="none" stroke="#E8562A" stroke-width="1.5"/>
      <rect x="6.4" y="20.8" width="11.5" height="11" fill="none" stroke="#E8562A" stroke-width="1.5"/>
      <rect x="20.2" y="20.8" width="11.5" height="11" fill="none" stroke="#E8562A" stroke-width="1.5"/>
    </svg>
<span class="t" style="left:1610.30px;top:153px;font-size:13.75px;line-height:13.75px;color:#333333;transform:scaleX(1.0688);">Suplementos</span>
<span class="t" style="left:1614.00px;top:205px;font-size:12.75px;line-height:12.75px;color:#333333;transform:scaleX(0.9967);">Suplementos</span>
<div class="r" style="left:1708px;top:104px;width:1px;height:111px;background:#D6D6D6;"></div>
<svg class="r" style="left:1884.0px;top:199px;" width="15.5" height="12" viewBox="0 0 15.5 12"><polyline points="2.4899999999999998,2.4899999999999998 7.75,9.51 13.01,2.4899999999999998" fill="none" stroke="#444" stroke-width="1.4"/></svg>
<svg class="r" style="left:24px;top:230px;" width="22" height="22" viewBox="0 0 22 22">
      <circle cx="10.9" cy="10.8" r="9.2" fill="#FAFAFA" stroke="#1E88D8" stroke-width="1.6"/>
      <rect x="9.9" y="9.2" width="2.1" height="6.6" fill="#1E88D8"/>
      <rect x="9.9" y="5.9" width="2.1" height="2" fill="#1E88D8"/>
    </svg>
<span class="t" style="left:55.70px;top:235px;font-size:14.75px;line-height:14.75px;color:#242424;transform:scaleX(0.9260);">POSSÍVEL PERDA DE DADOS</span>
<span class="t" style="left:262.50px;top:235px;font-size:14.25px;line-height:14.25px;color:#242424;transform:scaleX(1.0342);">Alguns recursos podem ser perdidos se você salvar esta pasta de trabalho no formato (.csv) delimitada por vírgulas. Para preservar estes recursos, salve-a em um formato de arquivo do Excel.</span>
<div class="r" style="left:262.5px;top:248px;width:1256.5px;height:1px;background:#333;"></div>
<div class="r" style="left:1534px;top:225px;width:186px;height:32px;background:#FFFFFF;border:1px solid #8A8A8A;box-sizing:border-box;border-radius:4px;"></div>
<span class="t" style="left:1545.00px;top:235px;font-size:14.25px;line-height:14.25px;color:#242424;transform:scaleX(1.0503);">Não mostrar novamente</span>
<div class="r" style="left:1731px;top:225px;width:116px;height:32px;background:#FFFFFF;border:1px solid #8A8A8A;box-sizing:border-box;border-radius:4px;"></div>
<span class="t" style="left:1742.30px;top:235px;font-size:14.25px;line-height:14.25px;color:#242424;">Salvar como...</span>
<svg class="r" style="left:1882px;top:234px;" width="16" height="16" viewBox="0 0 16 16"><path d="M2 1.7 L14 13.3 M14 1.7 L2 13.3" stroke="#333" stroke-width="1.3"/></svg>
<div class="r" style="left:11px;top:270px;width:171px;height:29.5px;background:#fff;border:1px solid #D2D2D2;box-sizing:border-box;border-radius:5px;"></div>
<span class="t" style="left:17.60px;top:279px;font-size:14.75px;line-height:14.75px;color:#242424;transform:scaleX(0.9962);">E22</span>
<svg class="r" style="left:160.35px;top:281px;" width="16.5" height="11" viewBox="0 0 16.5 11"><polyline points="2.4899999999999998,2.4899999999999998 8.25,8.51 14.01,2.4899999999999998" fill="none" stroke="#333" stroke-width="1.4"/></svg>
<svg class="r" style="left:190px;top:276px;" width="8" height="18" viewBox="0 0 8 18"><rect x="3" y="3.2" width="2.8" height="2.6" fill="#333"/><rect x="3" y="8.7" width="2.8" height="2.6" fill="#333"/><rect x="3" y="13.6" width="2.8" height="2.6" fill="#333"/></svg>
<div class="r" style="left:207px;top:270px;width:92px;height:29.5px;background:#fff;border:1px solid #D2D2D2;box-sizing:border-box;border-radius:5px;"></div>
<svg class="r" style="left:213px;top:276px;" width="20" height="20" viewBox="0 0 20 20"><path d="M3 2.5 L17 16.5 M17 2.5 L3 16.5" stroke="#B5B5B5" stroke-width="1.3"/></svg>
<svg class="r" style="left:240px;top:276px;" width="26" height="20" viewBox="0 0 26 20"><path d="M2.5 10 L8.5 16 L23 2" fill="none" stroke="#B5B5B5" stroke-width="1.3"/></svg>
<svg class="r" style="left:270px;top:270px;" width="26" height="28" viewBox="0 0 26 28"><text x="3.5" y="19.7" font-family="Liberation Serif" font-style="italic" font-size="20" fill="#222" textLength="18" lengthAdjust="spacingAndGlyphs">fx</text></svg>
<div class="r" style="left:305px;top:270px;width:1605px;height:29.5px;background:#fff;border:1px solid #D2D2D2;box-sizing:border-box;border-radius:5px;"></div>
<svg class="r" style="left:1890.25px;top:279.5px;" width="16.5" height="10.0" viewBox="0 0 16.5 10.0"><polyline points="2.455,2.455 8.25,7.545 14.045,2.455" fill="none" stroke="#333" stroke-width="1.3"/></svg>
<div class="r" style="left:0px;top:308px;width:1894px;height:645px;background:#FFFFFF;"></div>
<div class="r" style="left:0px;top:308px;width:1894px;height:23px;background:#F0F0F0;"></div>
<div class="r" style="left:0px;top:331px;width:33px;height:622px;background:#F0F0F0;"></div>
<div class="r" style="left:34px;top:308px;width:399px;height:23px;background:#D3D3D3;"></div>
<div class="r" style="left:0px;top:331px;width:33px;height:528px;background:#D3D3D3;"></div>
<div class="r" style="left:34px;top:332px;width:400px;height:527px;background:#C6C6C6;"></div>
<div class="r" style="left:354px;top:836px;width:80px;height:23px;background:#FFFFFF;"></div>
<svg class="r" style="left:0px;top:0px;pointer-events:none;" width="1920" height="1020" viewBox="0 0 1920 1020"><rect x="33" y="308" width="1" height="23" fill="#ABABAB"/><rect x="113" y="308" width="1" height="23" fill="#ABABAB"/><rect x="193" y="308" width="1" height="23" fill="#ABABAB"/><rect x="273" y="308" width="1" height="23" fill="#ABABAB"/><rect x="353" y="308" width="1" height="23" fill="#ABABAB"/><rect x="433" y="308" width="1" height="23" fill="#ABABAB"/><rect x="513" y="308" width="1" height="23" fill="#A2A2A2"/><rect x="593" y="308" width="1" height="23" fill="#A2A2A2"/><rect x="673" y="308" width="1" height="23" fill="#A2A2A2"/><rect x="753" y="308" width="1" height="23" fill="#A2A2A2"/><rect x="833" y="308" width="1" height="23" fill="#A2A2A2"/><rect x="913" y="308" width="1" height="23" fill="#A2A2A2"/><rect x="993" y="308" width="1" height="23" fill="#A2A2A2"/><rect x="1073" y="308" width="1" height="23" fill="#A2A2A2"/><rect x="1153" y="308" width="1" height="23" fill="#A2A2A2"/><rect x="1233" y="308" width="1" height="23" fill="#A2A2A2"/><rect x="1313" y="308" width="1" height="23" fill="#A2A2A2"/><rect x="1393" y="308" width="1" height="23" fill="#A2A2A2"/><rect x="1473" y="308" width="1" height="23" fill="#A2A2A2"/><rect x="1553" y="308" width="1" height="23" fill="#A2A2A2"/><rect x="1633" y="308" width="1" height="23" fill="#A2A2A2"/><rect x="1713" y="308" width="1" height="23" fill="#A2A2A2"/><rect x="1793" y="308" width="1" height="23" fill="#A2A2A2"/><rect x="1873" y="308" width="1" height="23" fill="#A2A2A2"/><rect x="0" y="331" width="1894" height="1" fill="#9E9E9E"/><rect x="33" y="308" width="1" height="645" fill="#9E9E9E"/><rect x="0" y="355" width="33" height="1" fill="#ABABAB"/><rect x="34" y="355" width="400" height="1" fill="#ABABAB"/><rect x="434" y="355" width="1460" height="1" fill="#E1E1E1"/><rect x="0" y="379" width="33" height="1" fill="#ABABAB"/><rect x="34" y="379" width="400" height="1" fill="#ABABAB"/><rect x="434" y="379" width="1460" height="1" fill="#E1E1E1"/><rect x="0" y="403" width="33" height="1" fill="#ABABAB"/><rect x="34" y="403" width="400" height="1" fill="#ABABAB"/><rect x="434" y="403" width="1460" height="1" fill="#E1E1E1"/><rect x="0" y="427" width="33" height="1" fill="#ABABAB"/><rect x="34" y="427" width="400" height="1" fill="#ABABAB"/><rect x="434" y="427" width="1460" height="1" fill="#E1E1E1"/><rect x="0" y="451" width="33" height="1" fill="#ABABAB"/><rect x="34" y="451" width="400" height="1" fill="#ABABAB"/><rect x="434" y="451" width="1460" height="1" fill="#E1E1E1"/><rect x="0" y="475" width="33" height="1" fill="#ABABAB"/><rect x="34" y="475" width="400" height="1" fill="#ABABAB"/><rect x="434" y="475" width="1460" height="1" fill="#E1E1E1"/><rect x="0" y="499" width="33" height="1" fill="#ABABAB"/><rect x="34" y="499" width="400" height="1" fill="#ABABAB"/><rect x="434" y="499" width="1460" height="1" fill="#E1E1E1"/><rect x="0" y="523" width="33" height="1" fill="#ABABAB"/><rect x="34" y="523" width="400" height="1" fill="#ABABAB"/><rect x="434" y="523" width="1460" height="1" fill="#E1E1E1"/><rect x="0" y="547" width="33" height="1" fill="#ABABAB"/><rect x="34" y="547" width="400" height="1" fill="#ABABAB"/><rect x="434" y="547" width="1460" height="1" fill="#E1E1E1"/><rect x="0" y="571" width="33" height="1" fill="#ABABAB"/><rect x="34" y="571" width="400" height="1" fill="#ABABAB"/><rect x="434" y="571" width="1460" height="1" fill="#E1E1E1"/><rect x="0" y="595" width="33" height="1" fill="#ABABAB"/><rect x="34" y="595" width="400" height="1" fill="#ABABAB"/><rect x="434" y="595" width="1460" height="1" fill="#E1E1E1"/><rect x="0" y="619" width="33" height="1" fill="#ABABAB"/><rect x="34" y="619" width="400" height="1" fill="#ABABAB"/><rect x="434" y="619" width="1460" height="1" fill="#E1E1E1"/><rect x="0" y="643" width="33" height="1" fill="#ABABAB"/><rect x="34" y="643" width="400" height="1" fill="#ABABAB"/><rect x="434" y="643" width="1460" height="1" fill="#E1E1E1"/><rect x="0" y="667" width="33" height="1" fill="#ABABAB"/><rect x="34" y="667" width="400" height="1" fill="#ABABAB"/><rect x="434" y="667" width="1460" height="1" fill="#E1E1E1"/><rect x="0" y="691" width="33" height="1" fill="#ABABAB"/><rect x="34" y="691" width="400" height="1" fill="#ABABAB"/><rect x="434" y="691" width="1460" height="1" fill="#E1E1E1"/><rect x="0" y="715" width="33" height="1" fill="#ABABAB"/><rect x="34" y="715" width="400" height="1" fill="#ABABAB"/><rect x="434" y="715" width="1460" height="1" fill="#E1E1E1"/><rect x="0" y="739" width="33" height="1" fill="#ABABAB"/><rect x="34" y="739" width="400" height="1" fill="#ABABAB"/><rect x="434" y="739" width="1460" height="1" fill="#E1E1E1"/><rect x="0" y="763" width="33" height="1" fill="#ABABAB"/><rect x="34" y="763" width="400" height="1" fill="#ABABAB"/><rect x="434" y="763" width="1460" height="1" fill="#E1E1E1"/><rect x="0" y="787" width="33" height="1" fill="#ABABAB"/><rect x="34" y="787" width="400" height="1" fill="#ABABAB"/><rect x="434" y="787" width="1460" height="1" fill="#E1E1E1"/><rect x="0" y="811" width="33" height="1" fill="#ABABAB"/><rect x="34" y="811" width="400" height="1" fill="#ABABAB"/><rect x="434" y="811" width="1460" height="1" fill="#E1E1E1"/><rect x="0" y="835" width="33" height="1" fill="#ABABAB"/><rect x="34" y="835" width="400" height="1" fill="#ABABAB"/><rect x="434" y="835" width="1460" height="1" fill="#E1E1E1"/><rect x="0" y="859" width="33" height="1" fill="#ABABAB"/><rect x="34" y="859" width="1860" height="1" fill="#E1E1E1"/><rect x="0" y="883" width="33" height="1" fill="#BEBEBE"/><rect x="34" y="883" width="1860" height="1" fill="#E1E1E1"/><rect x="0" y="907" width="33" height="1" fill="#BEBEBE"/><rect x="34" y="907" width="1860" height="1" fill="#E1E1E1"/><rect x="0" y="931" width="33" height="1" fill="#BEBEBE"/><rect x="34" y="931" width="1860" height="1" fill="#E1E1E1"/><rect x="113" y="836" width="1" height="23" fill="#ABABAB"/><rect x="113" y="860" width="1" height="23" fill="#E1E1E1"/><rect x="113" y="884" width="1" height="23" fill="#E1E1E1"/><rect x="113" y="908" width="1" height="23" fill="#E1E1E1"/><rect x="113" y="932" width="1" height="21" fill="#E1E1E1"/><rect x="193" y="836" width="1" height="23" fill="#ABABAB"/><rect x="193" y="860" width="1" height="23" fill="#E1E1E1"/><rect x="193" y="884" width="1" height="23" fill="#E1E1E1"/><rect x="193" y="908" width="1" height="23" fill="#E1E1E1"/><rect x="193" y="932" width="1" height="21" fill="#E1E1E1"/><rect x="273" y="380" width="1" height="23" fill="#ABABAB"/><rect x="273" y="404" width="1" height="23" fill="#ABABAB"/><rect x="273" y="452" width="1" height="23" fill="#ABABAB"/><rect x="273" y="476" width="1" height="23" fill="#ABABAB"/><rect x="273" y="572" width="1" height="23" fill="#ABABAB"/><rect x="273" y="620" width="1" height="23" fill="#ABABAB"/><rect x="273" y="644" width="1" height="23" fill="#ABABAB"/><rect x="273" y="692" width="1" height="23" fill="#ABABAB"/><rect x="273" y="716" width="1" height="23" fill="#ABABAB"/><rect x="273" y="764" width="1" height="23" fill="#ABABAB"/><rect x="273" y="788" width="1" height="23" fill="#ABABAB"/><rect x="273" y="812" width="1" height="23" fill="#ABABAB"/><rect x="273" y="836" width="1" height="23" fill="#ABABAB"/><rect x="273" y="860" width="1" height="23" fill="#E1E1E1"/><rect x="273" y="884" width="1" height="23" fill="#E1E1E1"/><rect x="273" y="908" width="1" height="23" fill="#E1E1E1"/><rect x="273" y="932" width="1" height="21" fill="#E1E1E1"/><rect x="353" y="356" width="1" height="23" fill="#ABABAB"/><rect x="353" y="380" width="1" height="23" fill="#ABABAB"/><rect x="353" y="404" width="1" height="23" fill="#ABABAB"/><rect x="353" y="428" width="1" height="23" fill="#ABABAB"/><rect x="353" y="452" width="1" height="23" fill="#ABABAB"/><rect x="353" y="476" width="1" height="23" fill="#ABABAB"/><rect x="353" y="500" width="1" height="23" fill="#ABABAB"/><rect x="353" y="524" width="1" height="23" fill="#ABABAB"/><rect x="353" y="548" width="1" height="23" fill="#ABABAB"/><rect x="353" y="572" width="1" height="23" fill="#ABABAB"/><rect x="353" y="596" width="1" height="23" fill="#ABABAB"/><rect x="353" y="620" width="1" height="23" fill="#ABABAB"/><rect x="353" y="644" width="1" height="23" fill="#ABABAB"/><rect x="353" y="668" width="1" height="23" fill="#ABABAB"/><rect x="353" y="692" width="1" height="23" fill="#ABABAB"/><rect x="353" y="716" width="1" height="23" fill="#ABABAB"/><rect x="353" y="740" width="1" height="23" fill="#ABABAB"/><rect x="353" y="764" width="1" height="23" fill="#ABABAB"/><rect x="353" y="788" width="1" height="23" fill="#ABABAB"/><rect x="353" y="812" width="1" height="23" fill="#ABABAB"/><rect x="353" y="836" width="1" height="23" fill="#ABABAB"/><rect x="353" y="860" width="1" height="23" fill="#E1E1E1"/><rect x="353" y="884" width="1" height="23" fill="#E1E1E1"/><rect x="353" y="908" width="1" height="23" fill="#E1E1E1"/><rect x="353" y="932" width="1" height="21" fill="#E1E1E1"/><rect x="433" y="332" width="1" height="23" fill="#E1E1E1"/><rect x="433" y="356" width="1" height="23" fill="#E1E1E1"/><rect x="433" y="380" width="1" height="23" fill="#E1E1E1"/><rect x="433" y="404" width="1" height="23" fill="#E1E1E1"/><rect x="433" y="428" width="1" height="23" fill="#E1E1E1"/><rect x="433" y="452" width="1" height="23" fill="#E1E1E1"/><rect x="433" y="476" width="1" height="23" fill="#E1E1E1"/><rect x="433" y="500" width="1" height="23" fill="#E1E1E1"/><rect x="433" y="524" width="1" height="23" fill="#E1E1E1"/><rect x="433" y="548" width="1" height="23" fill="#E1E1E1"/><rect x="433" y="572" width="1" height="23" fill="#E1E1E1"/><rect x="433" y="596" width="1" height="23" fill="#E1E1E1"/><rect x="433" y="620" width="1" height="23" fill="#E1E1E1"/><rect x="433" y="644" width="1" height="23" fill="#E1E1E1"/><rect x="433" y="668" width="1" height="23" fill="#E1E1E1"/><rect x="433" y="692" width="1" height="23" fill="#E1E1E1"/><rect x="433" y="716" width="1" height="23" fill="#E1E1E1"/><rect x="433" y="740" width="1" height="23" fill="#E1E1E1"/><rect x="433" y="764" width="1" height="23" fill="#E1E1E1"/><rect x="433" y="788" width="1" height="23" fill="#E1E1E1"/><rect x="433" y="812" width="1" height="23" fill="#E1E1E1"/><rect x="433" y="836" width="1" height="23" fill="#E1E1E1"/><rect x="433" y="860" width="1" height="23" fill="#E1E1E1"/><rect x="433" y="884" width="1" height="23" fill="#E1E1E1"/><rect x="433" y="908" width="1" height="23" fill="#E1E1E1"/><rect x="433" y="932" width="1" height="21" fill="#E1E1E1"/><rect x="513" y="332" width="1" height="23" fill="#E1E1E1"/><rect x="513" y="356" width="1" height="23" fill="#E1E1E1"/><rect x="513" y="380" width="1" height="23" fill="#E1E1E1"/><rect x="513" y="404" width="1" height="23" fill="#E1E1E1"/><rect x="513" y="428" width="1" height="23" fill="#E1E1E1"/><rect x="513" y="452" width="1" height="23" fill="#E1E1E1"/><rect x="513" y="476" width="1" height="23" fill="#E1E1E1"/><rect x="513" y="500" width="1" height="23" fill="#E1E1E1"/><rect x="513" y="524" width="1" height="23" fill="#E1E1E1"/><rect x="513" y="548" width="1" height="23" fill="#E1E1E1"/><rect x="513" y="572" width="1" height="23" fill="#E1E1E1"/><rect x="513" y="596" width="1" height="23" fill="#E1E1E1"/><rect x="513" y="620" width="1" height="23" fill="#E1E1E1"/><rect x="513" y="644" width="1" height="23" fill="#E1E1E1"/><rect x="513" y="668" width="1" height="23" fill="#E1E1E1"/><rect x="513" y="692" width="1" height="23" fill="#E1E1E1"/><rect x="513" y="716" width="1" height="23" fill="#E1E1E1"/><rect x="513" y="740" width="1" height="23" fill="#E1E1E1"/><rect x="513" y="764" width="1" height="23" fill="#E1E1E1"/><rect x="513" y="788" width="1" height="23" fill="#E1E1E1"/><rect x="513" y="812" width="1" height="23" fill="#E1E1E1"/><rect x="513" y="836" width="1" height="23" fill="#E1E1E1"/><rect x="513" y="860" width="1" height="23" fill="#E1E1E1"/><rect x="513" y="884" width="1" height="23" fill="#E1E1E1"/><rect x="513" y="908" width="1" height="23" fill="#E1E1E1"/><rect x="513" y="932" width="1" height="21" fill="#E1E1E1"/><rect x="593" y="332" width="1" height="23" fill="#E1E1E1"/><rect x="593" y="356" width="1" height="23" fill="#E1E1E1"/><rect x="593" y="380" width="1" height="23" fill="#E1E1E1"/><rect x="593" y="404" width="1" height="23" fill="#E1E1E1"/><rect x="593" y="428" width="1" height="23" fill="#E1E1E1"/><rect x="593" y="452" width="1" height="23" fill="#E1E1E1"/><rect x="593" y="476" width="1" height="23" fill="#E1E1E1"/><rect x="593" y="500" width="1" height="23" fill="#E1E1E1"/><rect x="593" y="524" width="1" height="23" fill="#E1E1E1"/><rect x="593" y="548" width="1" height="23" fill="#E1E1E1"/><rect x="593" y="572" width="1" height="23" fill="#E1E1E1"/><rect x="593" y="596" width="1" height="23" fill="#E1E1E1"/><rect x="593" y="620" width="1" height="23" fill="#E1E1E1"/><rect x="593" y="644" width="1" height="23" fill="#E1E1E1"/><rect x="593" y="668" width="1" height="23" fill="#E1E1E1"/><rect x="593" y="692" width="1" height="23" fill="#E1E1E1"/><rect x="593" y="716" width="1" height="23" fill="#E1E1E1"/><rect x="593" y="740" width="1" height="23" fill="#E1E1E1"/><rect x="593" y="764" width="1" height="23" fill="#E1E1E1"/><rect x="593" y="788" width="1" height="23" fill="#E1E1E1"/><rect x="593" y="812" width="1" height="23" fill="#E1E1E1"/><rect x="593" y="836" width="1" height="23" fill="#E1E1E1"/><rect x="593" y="860" width="1" height="23" fill="#E1E1E1"/><rect x="593" y="884" width="1" height="23" fill="#E1E1E1"/><rect x="593" y="908" width="1" height="23" fill="#E1E1E1"/><rect x="593" y="932" width="1" height="21" fill="#E1E1E1"/><rect x="673" y="332" width="1" height="23" fill="#E1E1E1"/><rect x="673" y="356" width="1" height="23" fill="#E1E1E1"/><rect x="673" y="380" width="1" height="23" fill="#E1E1E1"/><rect x="673" y="404" width="1" height="23" fill="#E1E1E1"/><rect x="673" y="428" width="1" height="23" fill="#E1E1E1"/><rect x="673" y="452" width="1" height="23" fill="#E1E1E1"/><rect x="673" y="476" width="1" height="23" fill="#E1E1E1"/><rect x="673" y="500" width="1" height="23" fill="#E1E1E1"/><rect x="673" y="524" width="1" height="23" fill="#E1E1E1"/><rect x="673" y="548" width="1" height="23" fill="#E1E1E1"/><rect x="673" y="572" width="1" height="23" fill="#E1E1E1"/><rect x="673" y="596" width="1" height="23" fill="#E1E1E1"/><rect x="673" y="620" width="1" height="23" fill="#E1E1E1"/><rect x="673" y="644" width="1" height="23" fill="#E1E1E1"/><rect x="673" y="668" width="1" height="23" fill="#E1E1E1"/><rect x="673" y="692" width="1" height="23" fill="#E1E1E1"/><rect x="673" y="716" width="1" height="23" fill="#E1E1E1"/><rect x="673" y="740" width="1" height="23" fill="#E1E1E1"/><rect x="673" y="764" width="1" height="23" fill="#E1E1E1"/><rect x="673" y="788" width="1" height="23" fill="#E1E1E1"/><rect x="673" y="812" width="1" height="23" fill="#E1E1E1"/><rect x="673" y="836" width="1" height="23" fill="#E1E1E1"/><rect x="673" y="860" width="1" height="23" fill="#E1E1E1"/><rect x="673" y="884" width="1" height="23" fill="#E1E1E1"/><rect x="673" y="908" width="1" height="23" fill="#E1E1E1"/><rect x="673" y="932" width="1" height="21" fill="#E1E1E1"/><rect x="753" y="332" width="1" height="23" fill="#E1E1E1"/><rect x="753" y="356" width="1" height="23" fill="#E1E1E1"/><rect x="753" y="380" width="1" height="23" fill="#E1E1E1"/><rect x="753" y="404" width="1" height="23" fill="#E1E1E1"/><rect x="753" y="428" width="1" height="23" fill="#E1E1E1"/><rect x="753" y="452" width="1" height="23" fill="#E1E1E1"/><rect x="753" y="476" width="1" height="23" fill="#E1E1E1"/><rect x="753" y="500" width="1" height="23" fill="#E1E1E1"/><rect x="753" y="524" width="1" height="23" fill="#E1E1E1"/><rect x="753" y="548" width="1" height="23" fill="#E1E1E1"/><rect x="753" y="572" width="1" height="23" fill="#E1E1E1"/><rect x="753" y="596" width="1" height="23" fill="#E1E1E1"/><rect x="753" y="620" width="1" height="23" fill="#E1E1E1"/><rect x="753" y="644" width="1" height="23" fill="#E1E1E1"/><rect x="753" y="668" width="1" height="23" fill="#E1E1E1"/><rect x="753" y="692" width="1" height="23" fill="#E1E1E1"/><rect x="753" y="716" width="1" height="23" fill="#E1E1E1"/><rect x="753" y="740" width="1" height="23" fill="#E1E1E1"/><rect x="753" y="764" width="1" height="23" fill="#E1E1E1"/><rect x="753" y="788" width="1" height="23" fill="#E1E1E1"/><rect x="753" y="812" width="1" height="23" fill="#E1E1E1"/><rect x="753" y="836" width="1" height="23" fill="#E1E1E1"/><rect x="753" y="860" width="1" height="23" fill="#E1E1E1"/><rect x="753" y="884" width="1" height="23" fill="#E1E1E1"/><rect x="753" y="908" width="1" height="23" fill="#E1E1E1"/><rect x="753" y="932" width="1" height="21" fill="#E1E1E1"/><rect x="833" y="332" width="1" height="23" fill="#E1E1E1"/><rect x="833" y="356" width="1" height="23" fill="#E1E1E1"/><rect x="833" y="380" width="1" height="23" fill="#E1E1E1"/><rect x="833" y="404" width="1" height="23" fill="#E1E1E1"/><rect x="833" y="428" width="1" height="23" fill="#E1E1E1"/><rect x="833" y="452" width="1" height="23" fill="#E1E1E1"/><rect x="833" y="476" width="1" height="23" fill="#E1E1E1"/><rect x="833" y="500" width="1" height="23" fill="#E1E1E1"/><rect x="833" y="524" width="1" height="23" fill="#E1E1E1"/><rect x="833" y="548" width="1" height="23" fill="#E1E1E1"/><rect x="833" y="572" width="1" height="23" fill="#E1E1E1"/><rect x="833" y="596" width="1" height="23" fill="#E1E1E1"/><rect x="833" y="620" width="1" height="23" fill="#E1E1E1"/><rect x="833" y="644" width="1" height="23" fill="#E1E1E1"/><rect x="833" y="668" width="1" height="23" fill="#E1E1E1"/><rect x="833" y="692" width="1" height="23" fill="#E1E1E1"/><rect x="833" y="716" width="1" height="23" fill="#E1E1E1"/><rect x="833" y="740" width="1" height="23" fill="#E1E1E1"/><rect x="833" y="764" width="1" height="23" fill="#E1E1E1"/><rect x="833" y="788" width="1" height="23" fill="#E1E1E1"/><rect x="833" y="812" width="1" height="23" fill="#E1E1E1"/><rect x="833" y="836" width="1" height="23" fill="#E1E1E1"/><rect x="833" y="860" width="1" height="23" fill="#E1E1E1"/><rect x="833" y="884" width="1" height="23" fill="#E1E1E1"/><rect x="833" y="908" width="1" height="23" fill="#E1E1E1"/><rect x="833" y="932" width="1" height="21" fill="#E1E1E1"/><rect x="913" y="332" width="1" height="23" fill="#E1E1E1"/><rect x="913" y="356" width="1" height="23" fill="#E1E1E1"/><rect x="913" y="380" width="1" height="23" fill="#E1E1E1"/><rect x="913" y="404" width="1" height="23" fill="#E1E1E1"/><rect x="913" y="428" width="1" height="23" fill="#E1E1E1"/><rect x="913" y="452" width="1" height="23" fill="#E1E1E1"/><rect x="913" y="476" width="1" height="23" fill="#E1E1E1"/><rect x="913" y="500" width="1" height="23" fill="#E1E1E1"/><rect x="913" y="524" width="1" height="23" fill="#E1E1E1"/><rect x="913" y="548" width="1" height="23" fill="#E1E1E1"/><rect x="913" y="572" width="1" height="23" fill="#E1E1E1"/><rect x="913" y="596" width="1" height="23" fill="#E1E1E1"/><rect x="913" y="620" width="1" height="23" fill="#E1E1E1"/><rect x="913" y="644" width="1" height="23" fill="#E1E1E1"/><rect x="913" y="668" width="1" height="23" fill="#E1E1E1"/><rect x="913" y="692" width="1" height="23" fill="#E1E1E1"/><rect x="913" y="716" width="1" height="23" fill="#E1E1E1"/><rect x="913" y="740" width="1" height="23" fill="#E1E1E1"/><rect x="913" y="764" width="1" height="23" fill="#E1E1E1"/><rect x="913" y="788" width="1" height="23" fill="#E1E1E1"/><rect x="913" y="812" width="1" height="23" fill="#E1E1E1"/><rect x="913" y="836" width="1" height="23" fill="#E1E1E1"/><rect x="913" y="860" width="1" height="23" fill="#E1E1E1"/><rect x="913" y="884" width="1" height="23" fill="#E1E1E1"/><rect x="913" y="908" width="1" height="23" fill="#E1E1E1"/><rect x="913" y="932" width="1" height="21" fill="#E1E1E1"/><rect x="993" y="332" width="1" height="23" fill="#E1E1E1"/><rect x="993" y="356" width="1" height="23" fill="#E1E1E1"/><rect x="993" y="380" width="1" height="23" fill="#E1E1E1"/><rect x="993" y="404" width="1" height="23" fill="#E1E1E1"/><rect x="993" y="428" width="1" height="23" fill="#E1E1E1"/><rect x="993" y="452" width="1" height="23" fill="#E1E1E1"/><rect x="993" y="476" width="1" height="23" fill="#E1E1E1"/><rect x="993" y="500" width="1" height="23" fill="#E1E1E1"/><rect x="993" y="524" width="1" height="23" fill="#E1E1E1"/><rect x="993" y="548" width="1" height="23" fill="#E1E1E1"/><rect x="993" y="572" width="1" height="23" fill="#E1E1E1"/><rect x="993" y="596" width="1" height="23" fill="#E1E1E1"/><rect x="993" y="620" width="1" height="23" fill="#E1E1E1"/><rect x="993" y="644" width="1" height="23" fill="#E1E1E1"/><rect x="993" y="668" width="1" height="23" fill="#E1E1E1"/><rect x="993" y="692" width="1" height="23" fill="#E1E1E1"/><rect x="993" y="716" width="1" height="23" fill="#E1E1E1"/><rect x="993" y="740" width="1" height="23" fill="#E1E1E1"/><rect x="993" y="764" width="1" height="23" fill="#E1E1E1"/><rect x="993" y="788" width="1" height="23" fill="#E1E1E1"/><rect x="993" y="812" width="1" height="23" fill="#E1E1E1"/><rect x="993" y="836" width="1" height="23" fill="#E1E1E1"/><rect x="993" y="860" width="1" height="23" fill="#E1E1E1"/><rect x="993" y="884" width="1" height="23" fill="#E1E1E1"/><rect x="993" y="908" width="1" height="23" fill="#E1E1E1"/><rect x="993" y="932" width="1" height="21" fill="#E1E1E1"/><rect x="1073" y="332" width="1" height="23" fill="#E1E1E1"/><rect x="1073" y="356" width="1" height="23" fill="#E1E1E1"/><rect x="1073" y="380" width="1" height="23" fill="#E1E1E1"/><rect x="1073" y="404" width="1" height="23" fill="#E1E1E1"/><rect x="1073" y="428" width="1" height="23" fill="#E1E1E1"/><rect x="1073" y="452" width="1" height="23" fill="#E1E1E1"/><rect x="1073" y="476" width="1" height="23" fill="#E1E1E1"/><rect x="1073" y="500" width="1" height="23" fill="#E1E1E1"/><rect x="1073" y="524" width="1" height="23" fill="#E1E1E1"/><rect x="1073" y="548" width="1" height="23" fill="#E1E1E1"/><rect x="1073" y="572" width="1" height="23" fill="#E1E1E1"/><rect x="1073" y="596" width="1" height="23" fill="#E1E1E1"/><rect x="1073" y="620" width="1" height="23" fill="#E1E1E1"/><rect x="1073" y="644" width="1" height="23" fill="#E1E1E1"/><rect x="1073" y="668" width="1" height="23" fill="#E1E1E1"/><rect x="1073" y="692" width="1" height="23" fill="#E1E1E1"/><rect x="1073" y="716" width="1" height="23" fill="#E1E1E1"/><rect x="1073" y="740" width="1" height="23" fill="#E1E1E1"/><rect x="1073" y="764" width="1" height="23" fill="#E1E1E1"/><rect x="1073" y="788" width="1" height="23" fill="#E1E1E1"/><rect x="1073" y="812" width="1" height="23" fill="#E1E1E1"/><rect x="1073" y="836" width="1" height="23" fill="#E1E1E1"/><rect x="1073" y="860" width="1" height="23" fill="#E1E1E1"/><rect x="1073" y="884" width="1" height="23" fill="#E1E1E1"/><rect x="1073" y="908" width="1" height="23" fill="#E1E1E1"/><rect x="1073" y="932" width="1" height="21" fill="#E1E1E1"/><rect x="1153" y="332" width="1" height="23" fill="#E1E1E1"/><rect x="1153" y="356" width="1" height="23" fill="#E1E1E1"/><rect x="1153" y="380" width="1" height="23" fill="#E1E1E1"/><rect x="1153" y="404" width="1" height="23" fill="#E1E1E1"/><rect x="1153" y="428" width="1" height="23" fill="#E1E1E1"/><rect x="1153" y="452" width="1" height="23" fill="#E1E1E1"/><rect x="1153" y="476" width="1" height="23" fill="#E1E1E1"/><rect x="1153" y="500" width="1" height="23" fill="#E1E1E1"/><rect x="1153" y="524" width="1" height="23" fill="#E1E1E1"/><rect x="1153" y="548" width="1" height="23" fill="#E1E1E1"/><rect x="1153" y="572" width="1" height="23" fill="#E1E1E1"/><rect x="1153" y="596" width="1" height="23" fill="#E1E1E1"/><rect x="1153" y="620" width="1" height="23" fill="#E1E1E1"/><rect x="1153" y="644" width="1" height="23" fill="#E1E1E1"/><rect x="1153" y="668" width="1" height="23" fill="#E1E1E1"/><rect x="1153" y="692" width="1" height="23" fill="#E1E1E1"/><rect x="1153" y="716" width="1" height="23" fill="#E1E1E1"/><rect x="1153" y="740" width="1" height="23" fill="#E1E1E1"/><rect x="1153" y="764" width="1" height="23" fill="#E1E1E1"/><rect x="1153" y="788" width="1" height="23" fill="#E1E1E1"/><rect x="1153" y="812" width="1" height="23" fill="#E1E1E1"/><rect x="1153" y="836" width="1" height="23" fill="#E1E1E1"/><rect x="1153" y="860" width="1" height="23" fill="#E1E1E1"/><rect x="1153" y="884" width="1" height="23" fill="#E1E1E1"/><rect x="1153" y="908" width="1" height="23" fill="#E1E1E1"/><rect x="1153" y="932" width="1" height="21" fill="#E1E1E1"/><rect x="1233" y="332" width="1" height="23" fill="#E1E1E1"/><rect x="1233" y="356" width="1" height="23" fill="#E1E1E1"/><rect x="1233" y="380" width="1" height="23" fill="#E1E1E1"/><rect x="1233" y="404" width="1" height="23" fill="#E1E1E1"/><rect x="1233" y="428" width="1" height="23" fill="#E1E1E1"/><rect x="1233" y="452" width="1" height="23" fill="#E1E1E1"/><rect x="1233" y="476" width="1" height="23" fill="#E1E1E1"/><rect x="1233" y="500" width="1" height="23" fill="#E1E1E1"/><rect x="1233" y="524" width="1" height="23" fill="#E1E1E1"/><rect x="1233" y="548" width="1" height="23" fill="#E1E1E1"/><rect x="1233" y="572" width="1" height="23" fill="#E1E1E1"/><rect x="1233" y="596" width="1" height="23" fill="#E1E1E1"/><rect x="1233" y="620" width="1" height="23" fill="#E1E1E1"/><rect x="1233" y="644" width="1" height="23" fill="#E1E1E1"/><rect x="1233" y="668" width="1" height="23" fill="#E1E1E1"/><rect x="1233" y="692" width="1" height="23" fill="#E1E1E1"/><rect x="1233" y="716" width="1" height="23" fill="#E1E1E1"/><rect x="1233" y="740" width="1" height="23" fill="#E1E1E1"/><rect x="1233" y="764" width="1" height="23" fill="#E1E1E1"/><rect x="1233" y="788" width="1" height="23" fill="#E1E1E1"/><rect x="1233" y="812" width="1" height="23" fill="#E1E1E1"/><rect x="1233" y="836" width="1" height="23" fill="#E1E1E1"/><rect x="1233" y="860" width="1" height="23" fill="#E1E1E1"/><rect x="1233" y="884" width="1" height="23" fill="#E1E1E1"/><rect x="1233" y="908" width="1" height="23" fill="#E1E1E1"/><rect x="1233" y="932" width="1" height="21" fill="#E1E1E1"/><rect x="1313" y="332" width="1" height="23" fill="#E1E1E1"/><rect x="1313" y="356" width="1" height="23" fill="#E1E1E1"/><rect x="1313" y="380" width="1" height="23" fill="#E1E1E1"/><rect x="1313" y="404" width="1" height="23" fill="#E1E1E1"/><rect x="1313" y="428" width="1" height="23" fill="#E1E1E1"/><rect x="1313" y="452" width="1" height="23" fill="#E1E1E1"/><rect x="1313" y="476" width="1" height="23" fill="#E1E1E1"/><rect x="1313" y="500" width="1" height="23" fill="#E1E1E1"/><rect x="1313" y="524" width="1" height="23" fill="#E1E1E1"/><rect x="1313" y="548" width="1" height="23" fill="#E1E1E1"/><rect x="1313" y="572" width="1" height="23" fill="#E1E1E1"/><rect x="1313" y="596" width="1" height="23" fill="#E1E1E1"/><rect x="1313" y="620" width="1" height="23" fill="#E1E1E1"/><rect x="1313" y="644" width="1" height="23" fill="#E1E1E1"/><rect x="1313" y="668" width="1" height="23" fill="#E1E1E1"/><rect x="1313" y="692" width="1" height="23" fill="#E1E1E1"/><rect x="1313" y="716" width="1" height="23" fill="#E1E1E1"/><rect x="1313" y="740" width="1" height="23" fill="#E1E1E1"/><rect x="1313" y="764" width="1" height="23" fill="#E1E1E1"/><rect x="1313" y="788" width="1" height="23" fill="#E1E1E1"/><rect x="1313" y="812" width="1" height="23" fill="#E1E1E1"/><rect x="1313" y="836" width="1" height="23" fill="#E1E1E1"/><rect x="1313" y="860" width="1" height="23" fill="#E1E1E1"/><rect x="1313" y="884" width="1" height="23" fill="#E1E1E1"/><rect x="1313" y="908" width="1" height="23" fill="#E1E1E1"/><rect x="1313" y="932" width="1" height="21" fill="#E1E1E1"/><rect x="1393" y="332" width="1" height="23" fill="#E1E1E1"/><rect x="1393" y="356" width="1" height="23" fill="#E1E1E1"/><rect x="1393" y="380" width="1" height="23" fill="#E1E1E1"/><rect x="1393" y="404" width="1" height="23" fill="#E1E1E1"/><rect x="1393" y="428" width="1" height="23" fill="#E1E1E1"/><rect x="1393" y="452" width="1" height="23" fill="#E1E1E1"/><rect x="1393" y="476" width="1" height="23" fill="#E1E1E1"/><rect x="1393" y="500" width="1" height="23" fill="#E1E1E1"/><rect x="1393" y="524" width="1" height="23" fill="#E1E1E1"/><rect x="1393" y="548" width="1" height="23" fill="#E1E1E1"/><rect x="1393" y="572" width="1" height="23" fill="#E1E1E1"/><rect x="1393" y="596" width="1" height="23" fill="#E1E1E1"/><rect x="1393" y="620" width="1" height="23" fill="#E1E1E1"/><rect x="1393" y="644" width="1" height="23" fill="#E1E1E1"/><rect x="1393" y="668" width="1" height="23" fill="#E1E1E1"/><rect x="1393" y="692" width="1" height="23" fill="#E1E1E1"/><rect x="1393" y="716" width="1" height="23" fill="#E1E1E1"/><rect x="1393" y="740" width="1" height="23" fill="#E1E1E1"/><rect x="1393" y="764" width="1" height="23" fill="#E1E1E1"/><rect x="1393" y="788" width="1" height="23" fill="#E1E1E1"/><rect x="1393" y="812" width="1" height="23" fill="#E1E1E1"/><rect x="1393" y="836" width="1" height="23" fill="#E1E1E1"/><rect x="1393" y="860" width="1" height="23" fill="#E1E1E1"/><rect x="1393" y="884" width="1" height="23" fill="#E1E1E1"/><rect x="1393" y="908" width="1" height="23" fill="#E1E1E1"/><rect x="1393" y="932" width="1" height="21" fill="#E1E1E1"/><rect x="1473" y="332" width="1" height="23" fill="#E1E1E1"/><rect x="1473" y="356" width="1" height="23" fill="#E1E1E1"/><rect x="1473" y="380" width="1" height="23" fill="#E1E1E1"/><rect x="1473" y="404" width="1" height="23" fill="#E1E1E1"/><rect x="1473" y="428" width="1" height="23" fill="#E1E1E1"/><rect x="1473" y="452" width="1" height="23" fill="#E1E1E1"/><rect x="1473" y="476" width="1" height="23" fill="#E1E1E1"/><rect x="1473" y="500" width="1" height="23" fill="#E1E1E1"/><rect x="1473" y="524" width="1" height="23" fill="#E1E1E1"/><rect x="1473" y="548" width="1" height="23" fill="#E1E1E1"/><rect x="1473" y="572" width="1" height="23" fill="#E1E1E1"/><rect x="1473" y="596" width="1" height="23" fill="#E1E1E1"/><rect x="1473" y="620" width="1" height="23" fill="#E1E1E1"/><rect x="1473" y="644" width="1" height="23" fill="#E1E1E1"/><rect x="1473" y="668" width="1" height="23" fill="#E1E1E1"/><rect x="1473" y="692" width="1" height="23" fill="#E1E1E1"/><rect x="1473" y="716" width="1" height="23" fill="#E1E1E1"/><rect x="1473" y="740" width="1" height="23" fill="#E1E1E1"/><rect x="1473" y="764" width="1" height="23" fill="#E1E1E1"/><rect x="1473" y="788" width="1" height="23" fill="#E1E1E1"/><rect x="1473" y="812" width="1" height="23" fill="#E1E1E1"/><rect x="1473" y="836" width="1" height="23" fill="#E1E1E1"/><rect x="1473" y="860" width="1" height="23" fill="#E1E1E1"/><rect x="1473" y="884" width="1" height="23" fill="#E1E1E1"/><rect x="1473" y="908" width="1" height="23" fill="#E1E1E1"/><rect x="1473" y="932" width="1" height="21" fill="#E1E1E1"/><rect x="1553" y="332" width="1" height="23" fill="#E1E1E1"/><rect x="1553" y="356" width="1" height="23" fill="#E1E1E1"/><rect x="1553" y="380" width="1" height="23" fill="#E1E1E1"/><rect x="1553" y="404" width="1" height="23" fill="#E1E1E1"/><rect x="1553" y="428" width="1" height="23" fill="#E1E1E1"/><rect x="1553" y="452" width="1" height="23" fill="#E1E1E1"/><rect x="1553" y="476" width="1" height="23" fill="#E1E1E1"/><rect x="1553" y="500" width="1" height="23" fill="#E1E1E1"/><rect x="1553" y="524" width="1" height="23" fill="#E1E1E1"/><rect x="1553" y="548" width="1" height="23" fill="#E1E1E1"/><rect x="1553" y="572" width="1" height="23" fill="#E1E1E1"/><rect x="1553" y="596" width="1" height="23" fill="#E1E1E1"/><rect x="1553" y="620" width="1" height="23" fill="#E1E1E1"/><rect x="1553" y="644" width="1" height="23" fill="#E1E1E1"/><rect x="1553" y="668" width="1" height="23" fill="#E1E1E1"/><rect x="1553" y="692" width="1" height="23" fill="#E1E1E1"/><rect x="1553" y="716" width="1" height="23" fill="#E1E1E1"/><rect x="1553" y="740" width="1" height="23" fill="#E1E1E1"/><rect x="1553" y="764" width="1" height="23" fill="#E1E1E1"/><rect x="1553" y="788" width="1" height="23" fill="#E1E1E1"/><rect x="1553" y="812" width="1" height="23" fill="#E1E1E1"/><rect x="1553" y="836" width="1" height="23" fill="#E1E1E1"/><rect x="1553" y="860" width="1" height="23" fill="#E1E1E1"/><rect x="1553" y="884" width="1" height="23" fill="#E1E1E1"/><rect x="1553" y="908" width="1" height="23" fill="#E1E1E1"/><rect x="1553" y="932" width="1" height="21" fill="#E1E1E1"/><rect x="1633" y="332" width="1" height="23" fill="#E1E1E1"/><rect x="1633" y="356" width="1" height="23" fill="#E1E1E1"/><rect x="1633" y="380" width="1" height="23" fill="#E1E1E1"/><rect x="1633" y="404" width="1" height="23" fill="#E1E1E1"/><rect x="1633" y="428" width="1" height="23" fill="#E1E1E1"/><rect x="1633" y="452" width="1" height="23" fill="#E1E1E1"/><rect x="1633" y="476" width="1" height="23" fill="#E1E1E1"/><rect x="1633" y="500" width="1" height="23" fill="#E1E1E1"/><rect x="1633" y="524" width="1" height="23" fill="#E1E1E1"/><rect x="1633" y="548" width="1" height="23" fill="#E1E1E1"/><rect x="1633" y="572" width="1" height="23" fill="#E1E1E1"/><rect x="1633" y="596" width="1" height="23" fill="#E1E1E1"/><rect x="1633" y="620" width="1" height="23" fill="#E1E1E1"/><rect x="1633" y="644" width="1" height="23" fill="#E1E1E1"/><rect x="1633" y="668" width="1" height="23" fill="#E1E1E1"/><rect x="1633" y="692" width="1" height="23" fill="#E1E1E1"/><rect x="1633" y="716" width="1" height="23" fill="#E1E1E1"/><rect x="1633" y="740" width="1" height="23" fill="#E1E1E1"/><rect x="1633" y="764" width="1" height="23" fill="#E1E1E1"/><rect x="1633" y="788" width="1" height="23" fill="#E1E1E1"/><rect x="1633" y="812" width="1" height="23" fill="#E1E1E1"/><rect x="1633" y="836" width="1" height="23" fill="#E1E1E1"/><rect x="1633" y="860" width="1" height="23" fill="#E1E1E1"/><rect x="1633" y="884" width="1" height="23" fill="#E1E1E1"/><rect x="1633" y="908" width="1" height="23" fill="#E1E1E1"/><rect x="1633" y="932" width="1" height="21" fill="#E1E1E1"/><rect x="1713" y="332" width="1" height="23" fill="#E1E1E1"/><rect x="1713" y="356" width="1" height="23" fill="#E1E1E1"/><rect x="1713" y="380" width="1" height="23" fill="#E1E1E1"/><rect x="1713" y="404" width="1" height="23" fill="#E1E1E1"/><rect x="1713" y="428" width="1" height="23" fill="#E1E1E1"/><rect x="1713" y="452" width="1" height="23" fill="#E1E1E1"/><rect x="1713" y="476" width="1" height="23" fill="#E1E1E1"/><rect x="1713" y="500" width="1" height="23" fill="#E1E1E1"/><rect x="1713" y="524" width="1" height="23" fill="#E1E1E1"/><rect x="1713" y="548" width="1" height="23" fill="#E1E1E1"/><rect x="1713" y="572" width="1" height="23" fill="#E1E1E1"/><rect x="1713" y="596" width="1" height="23" fill="#E1E1E1"/><rect x="1713" y="620" width="1" height="23" fill="#E1E1E1"/><rect x="1713" y="644" width="1" height="23" fill="#E1E1E1"/><rect x="1713" y="668" width="1" height="23" fill="#E1E1E1"/><rect x="1713" y="692" width="1" height="23" fill="#E1E1E1"/><rect x="1713" y="716" width="1" height="23" fill="#E1E1E1"/><rect x="1713" y="740" width="1" height="23" fill="#E1E1E1"/><rect x="1713" y="764" width="1" height="23" fill="#E1E1E1"/><rect x="1713" y="788" width="1" height="23" fill="#E1E1E1"/><rect x="1713" y="812" width="1" height="23" fill="#E1E1E1"/><rect x="1713" y="836" width="1" height="23" fill="#E1E1E1"/><rect x="1713" y="860" width="1" height="23" fill="#E1E1E1"/><rect x="1713" y="884" width="1" height="23" fill="#E1E1E1"/><rect x="1713" y="908" width="1" height="23" fill="#E1E1E1"/><rect x="1713" y="932" width="1" height="21" fill="#E1E1E1"/><rect x="1793" y="332" width="1" height="23" fill="#E1E1E1"/><rect x="1793" y="356" width="1" height="23" fill="#E1E1E1"/><rect x="1793" y="380" width="1" height="23" fill="#E1E1E1"/><rect x="1793" y="404" width="1" height="23" fill="#E1E1E1"/><rect x="1793" y="428" width="1" height="23" fill="#E1E1E1"/><rect x="1793" y="452" width="1" height="23" fill="#E1E1E1"/><rect x="1793" y="476" width="1" height="23" fill="#E1E1E1"/><rect x="1793" y="500" width="1" height="23" fill="#E1E1E1"/><rect x="1793" y="524" width="1" height="23" fill="#E1E1E1"/><rect x="1793" y="548" width="1" height="23" fill="#E1E1E1"/><rect x="1793" y="572" width="1" height="23" fill="#E1E1E1"/><rect x="1793" y="596" width="1" height="23" fill="#E1E1E1"/><rect x="1793" y="620" width="1" height="23" fill="#E1E1E1"/><rect x="1793" y="644" width="1" height="23" fill="#E1E1E1"/><rect x="1793" y="668" width="1" height="23" fill="#E1E1E1"/><rect x="1793" y="692" width="1" height="23" fill="#E1E1E1"/><rect x="1793" y="716" width="1" height="23" fill="#E1E1E1"/><rect x="1793" y="740" width="1" height="23" fill="#E1E1E1"/><rect x="1793" y="764" width="1" height="23" fill="#E1E1E1"/><rect x="1793" y="788" width="1" height="23" fill="#E1E1E1"/><rect x="1793" y="812" width="1" height="23" fill="#E1E1E1"/><rect x="1793" y="836" width="1" height="23" fill="#E1E1E1"/><rect x="1793" y="860" width="1" height="23" fill="#E1E1E1"/><rect x="1793" y="884" width="1" height="23" fill="#E1E1E1"/><rect x="1793" y="908" width="1" height="23" fill="#E1E1E1"/><rect x="1793" y="932" width="1" height="21" fill="#E1E1E1"/><rect x="1873" y="332" width="1" height="23" fill="#E1E1E1"/><rect x="1873" y="356" width="1" height="23" fill="#E1E1E1"/><rect x="1873" y="380" width="1" height="23" fill="#E1E1E1"/><rect x="1873" y="404" width="1" height="23" fill="#E1E1E1"/><rect x="1873" y="428" width="1" height="23" fill="#E1E1E1"/><rect x="1873" y="452" width="1" height="23" fill="#E1E1E1"/><rect x="1873" y="476" width="1" height="23" fill="#E1E1E1"/><rect x="1873" y="500" width="1" height="23" fill="#E1E1E1"/><rect x="1873" y="524" width="1" height="23" fill="#E1E1E1"/><rect x="1873" y="548" width="1" height="23" fill="#E1E1E1"/><rect x="1873" y="572" width="1" height="23" fill="#E1E1E1"/><rect x="1873" y="596" width="1" height="23" fill="#E1E1E1"/><rect x="1873" y="620" width="1" height="23" fill="#E1E1E1"/><rect x="1873" y="644" width="1" height="23" fill="#E1E1E1"/><rect x="1873" y="668" width="1" height="23" fill="#E1E1E1"/><rect x="1873" y="692" width="1" height="23" fill="#E1E1E1"/><rect x="1873" y="716" width="1" height="23" fill="#E1E1E1"/><rect x="1873" y="740" width="1" height="23" fill="#E1E1E1"/><rect x="1873" y="764" width="1" height="23" fill="#E1E1E1"/><rect x="1873" y="788" width="1" height="23" fill="#E1E1E1"/><rect x="1873" y="812" width="1" height="23" fill="#E1E1E1"/><rect x="1873" y="836" width="1" height="23" fill="#E1E1E1"/><rect x="1873" y="860" width="1" height="23" fill="#E1E1E1"/><rect x="1873" y="884" width="1" height="23" fill="#E1E1E1"/><rect x="1873" y="908" width="1" height="23" fill="#E1E1E1"/><rect x="1873" y="932" width="1" height="21" fill="#E1E1E1"/></svg>
<svg class="r" style="left:0px;top:308px;" width="33" height="23" viewBox="0 0 33 23"><path d="M15 20 L30 20 L30 4 Z" fill="#B4B4B4"/></svg>
<span class="t" style="left:67.00px;top:312px;font-size:17.5px;line-height:17.5px;color:#1E6B44;">A</span>
<span class="t" style="left:147.00px;top:312px;font-size:17.5px;line-height:17.5px;color:#1E6B44;">B</span>
<span class="t" style="left:226.50px;top:312px;font-size:17.5px;line-height:17.5px;color:#1E6B44;">C</span>
<span class="t" style="left:306.50px;top:312px;font-size:17.5px;line-height:17.5px;color:#1E6B44;">D</span>
<span class="t" style="left:387.00px;top:312px;font-size:17.5px;line-height:17.5px;color:#1E6B44;">E</span>
<span class="t" style="left:467.50px;top:312px;font-size:17.5px;line-height:17.5px;color:#242424;">F</span>
<span class="t" style="left:546.00px;top:312px;font-size:17.5px;line-height:17.5px;color:#242424;">G</span>
<span class="t" style="left:626.50px;top:312px;font-size:17.5px;line-height:17.5px;color:#242424;">H</span>
<span class="t" style="left:710.50px;top:312px;font-size:17.5px;line-height:17.5px;color:#242424;">I</span>
<span class="t" style="left:788.50px;top:312px;font-size:17.5px;line-height:17.5px;color:#242424;">J</span>
<span class="t" style="left:867.00px;top:312px;font-size:17.5px;line-height:17.5px;color:#242424;">K</span>
<span class="t" style="left:948.00px;top:312px;font-size:17.5px;line-height:17.5px;color:#242424;">L</span>
<span class="t" style="left:1026.00px;top:312px;font-size:17.5px;line-height:17.5px;color:#242424;">M</span>
<span class="t" style="left:1106.50px;top:312px;font-size:17.5px;line-height:17.5px;color:#242424;">N</span>
<span class="t" style="left:1186.00px;top:312px;font-size:17.5px;line-height:17.5px;color:#242424;">O</span>
<span class="t" style="left:1267.00px;top:312px;font-size:17.5px;line-height:17.5px;color:#242424;">P</span>
<span class="t" style="left:1346.00px;top:312px;font-size:17.5px;line-height:17.5px;color:#242424;">Q</span>
<span class="t" style="left:1426.50px;top:312px;font-size:17.5px;line-height:17.5px;color:#242424;">R</span>
<span class="t" style="left:1507.00px;top:312px;font-size:17.5px;line-height:17.5px;color:#242424;">S</span>
<span class="t" style="left:1587.50px;top:312px;font-size:17.5px;line-height:17.5px;color:#242424;">T</span>
<span class="t" style="left:1666.50px;top:312px;font-size:17.5px;line-height:17.5px;color:#242424;">U</span>
<span class="t" style="left:1747.00px;top:312px;font-size:17.5px;line-height:17.5px;color:#242424;">V</span>
<span class="t" style="left:1825.00px;top:312px;font-size:17.5px;line-height:17.5px;color:#242424;">W</span>
<span class="t" style="left:12.30px;top:336px;font-size:16.5px;line-height:16.5px;color:#1E6B44;">1</span>
<span class="t" style="left:12.30px;top:360px;font-size:16.5px;line-height:16.5px;color:#1E6B44;">2</span>
<span class="t" style="left:12.30px;top:384px;font-size:16.5px;line-height:16.5px;color:#1E6B44;">3</span>
<span class="t" style="left:12.30px;top:408px;font-size:16.5px;line-height:16.5px;color:#1E6B44;">4</span>
<span class="t" style="left:12.30px;top:432px;font-size:16.5px;line-height:16.5px;color:#1E6B44;">5</span>
<span class="t" style="left:12.30px;top:456px;font-size:16.5px;line-height:16.5px;color:#1E6B44;">6</span>
<span class="t" style="left:12.30px;top:480px;font-size:16.5px;line-height:16.5px;color:#1E6B44;">7</span>
<span class="t" style="left:12.30px;top:504px;font-size:16.5px;line-height:16.5px;color:#1E6B44;">8</span>
<span class="t" style="left:12.30px;top:528px;font-size:16.5px;line-height:16.5px;color:#1E6B44;">9</span>
<span class="t" style="left:7.80px;top:552px;font-size:16.5px;line-height:16.5px;color:#1E6B44;">10</span>
<span class="t" style="left:8.30px;top:576px;font-size:16.5px;line-height:16.5px;color:#1E6B44;">11</span>
<span class="t" style="left:7.80px;top:600px;font-size:16.5px;line-height:16.5px;color:#1E6B44;">12</span>
<span class="t" style="left:7.80px;top:624px;font-size:16.5px;line-height:16.5px;color:#1E6B44;">13</span>
<span class="t" style="left:7.80px;top:648px;font-size:16.5px;line-height:16.5px;color:#1E6B44;">14</span>
<span class="t" style="left:7.80px;top:672px;font-size:16.5px;line-height:16.5px;color:#1E6B44;">15</span>
<span class="t" style="left:7.80px;top:696px;font-size:16.5px;line-height:16.5px;color:#1E6B44;">16</span>
<span class="t" style="left:7.80px;top:720px;font-size:16.5px;line-height:16.5px;color:#1E6B44;">17</span>
<span class="t" style="left:7.80px;top:744px;font-size:16.5px;line-height:16.5px;color:#1E6B44;">18</span>
<span class="t" style="left:7.80px;top:768px;font-size:16.5px;line-height:16.5px;color:#1E6B44;">19</span>
<span class="t" style="left:7.80px;top:792px;font-size:16.5px;line-height:16.5px;color:#1E6B44;">20</span>
<span class="t" style="left:7.80px;top:816px;font-size:16.5px;line-height:16.5px;color:#1E6B44;">21</span>
<span class="t" style="left:7.80px;top:840px;font-size:16.5px;line-height:16.5px;color:#1E6B44;">22</span>
<span class="t" style="left:7.80px;top:864px;font-size:16.5px;line-height:16.5px;color:#242424;">23</span>
<span class="t" style="left:7.80px;top:888px;font-size:16.5px;line-height:16.5px;color:#242424;">24</span>
<span class="t" style="left:7.80px;top:912px;font-size:16.5px;line-height:16.5px;color:#242424;">25</span>
<span class="t" style="left:7.80px;top:936px;font-size:16.5px;line-height:16.5px;color:#242424;">26</span>
<span class="t" style="left:37.60px;top:337px;font-size:15.5px;line-height:15.5px;color:#000000;transform:scaleX(1.0394);">Aluno,Prova 1,Prova 2,Prova 3,Prova 4,Nota final</span>
<span class="t" style="left:37.60px;top:361px;font-size:15.5px;line-height:15.5px;color:#000000;transform:scaleX(1.0507);">Marcelo Barbosa,6.5,8.3,9.2,7.2,</span>
<span class="t" style="left:37.60px;top:385px;font-size:15.5px;line-height:15.5px;color:#000000;transform:scaleX(1.0299);">Rafaela Santos,8.3,4.5,7.5,4.5,</span>
<span class="t" style="left:37.60px;top:409px;font-size:15.5px;line-height:15.5px;color:#000000;transform:scaleX(1.0312);">Ronaldo Santos,7,2.1,8.9,8.9,</span>
<span class="t" style="left:37.60px;top:433px;font-size:15.5px;line-height:15.5px;color:#000000;transform:scaleX(1.0288);">Lucas Gabriel Ribeiro,5.9,9.8,6.4,6.1,</span>
<span class="t" style="left:37.60px;top:457px;font-size:15.5px;line-height:15.5px;color:#000000;transform:scaleX(1.0162);">Luana da Silva,9.2,5.6,3.1,9.8,</span>
<span class="t" style="left:37.60px;top:481px;font-size:15.5px;line-height:15.5px;color:#000000;transform:scaleX(1.0454);">Mariana Pereira,4.7,1.2,5.8,5.4,</span>
<span class="t" style="left:37.60px;top:505px;font-size:15.5px;line-height:15.5px;color:#000000;transform:scaleX(1.0273);">Maria Eduarda Farias,8.8,7.7,4.2,10,</span>
<span class="t" style="left:37.60px;top:529px;font-size:15.5px;line-height:15.5px;color:#000000;transform:scaleX(1.0301);">Fernando Henrique Silva,6.1,6.9,9.7,2.3,</span>
<span class="t" style="left:37.60px;top:553px;font-size:15.5px;line-height:15.5px;color:#000000;transform:scaleX(1.0214);">Pedro Henrique Souza,7.2,3.4,8,6.7,</span>
<span class="t" style="left:37.60px;top:577px;font-size:15.5px;line-height:15.5px;color:#000000;transform:scaleX(1.0257);">Ana Paula Oliveira,0,0.5,7.2,8,</span>
<span class="t" style="left:37.60px;top:601px;font-size:15.5px;line-height:15.5px;color:#000000;transform:scaleX(1.0441);">Natália Guimarães,5.5,4.8,5.1,3.6,</span>
<span class="t" style="left:37.60px;top:625px;font-size:15.5px;line-height:15.5px;color:#000000;transform:scaleX(1.0448);">João Vitor Ferreira,8,8.9,2.8,0,</span>
<span class="t" style="left:37.60px;top:649px;font-size:15.5px;line-height:15.5px;color:#000000;transform:scaleX(1.0405);">Rodrigo Almeida,7.9,2.2,6.9,6.9,</span>
<span class="t" style="left:37.60px;top:673px;font-size:15.5px;line-height:15.5px;color:#000000;transform:scaleX(1.0362);">Gustavo Carvalho,6.4,9.1,7.6,4.3,</span>
<span class="t" style="left:37.60px;top:697px;font-size:15.5px;line-height:15.5px;color:#000000;transform:scaleX(1.0335);">Leticia Costa,9.9,1,9.4,7.8,</span>
<span class="t" style="left:37.60px;top:721px;font-size:15.5px;line-height:15.5px;color:#000000;transform:scaleX(1.0270);">Aline da Rocha,8.5,7.2,5.7,5,</span>
<span class="t" style="left:37.60px;top:745px;font-size:15.5px;line-height:15.5px;color:#000000;transform:scaleX(1.0409);">Marcos Vinicius Lima,6.8,3.3,4.5,8.3,</span>
<span class="t" style="left:37.60px;top:769px;font-size:15.5px;line-height:15.5px;color:#000000;transform:scaleX(1.0261);">Carla Cristina Castro,0,6,5.1,1.1,</span>
<span class="t" style="left:37.60px;top:793px;font-size:15.5px;line-height:15.5px;color:#000000;transform:scaleX(1.0353);">Isabela da Costa,5.2,5.1,6.3,9.1,</span>
<span class="t" style="left:37.60px;top:817px;font-size:15.5px;line-height:15.5px;color:#000000;transform:scaleX(1.0383);">Bruna Oliveira,9,2.5,9.9,7.6,</span>
<svg class="r" style="left:0px;top:0px;" width="1920" height="1020" viewBox="0 0 1920 1020"><path d="M39.4 852.3 L37.6 856.6" stroke="#111" stroke-width="1.7" stroke-linecap="round"/><path d="M43.4 852.3 L41.6 856.6" stroke="#111" stroke-width="1.7" stroke-linecap="round"/><path d="M47.4 852.3 L45.6 856.6" stroke="#111" stroke-width="1.7" stroke-linecap="round"/><path d="M51.4 852.3 L49.6 856.6" stroke="#111" stroke-width="1.7" stroke-linecap="round"/><path d="M55.4 852.3 L53.6 856.6" stroke="#111" stroke-width="1.7" stroke-linecap="round"/></svg>
<svg class="r" style="left:0px;top:0px;" width="1920" height="1020" viewBox="0 0 1920 1020"><path d="M39.4 876.3 L37.6 880.6" stroke="#111" stroke-width="1.7" stroke-linecap="round"/><path d="M43.4 876.3 L41.6 880.6" stroke="#111" stroke-width="1.7" stroke-linecap="round"/><path d="M47.4 876.3 L45.6 880.6" stroke="#111" stroke-width="1.7" stroke-linecap="round"/><path d="M51.4 876.3 L49.6 880.6" stroke="#111" stroke-width="1.7" stroke-linecap="round"/><path d="M55.4 876.3 L53.6 880.6" stroke="#111" stroke-width="1.7" stroke-linecap="round"/></svg>
<svg class="r" style="left:0px;top:0px;" width="1920" height="1020" viewBox="0 0 1920 1020"><path d="M39.4 900.3 L37.6 904.6" stroke="#111" stroke-width="1.7" stroke-linecap="round"/><path d="M43.4 900.3 L41.6 904.6" stroke="#111" stroke-width="1.7" stroke-linecap="round"/><path d="M47.4 900.3 L45.6 904.6" stroke="#111" stroke-width="1.7" stroke-linecap="round"/><path d="M51.4 900.3 L49.6 904.6" stroke="#111" stroke-width="1.7" stroke-linecap="round"/><path d="M55.4 900.3 L53.6 904.6" stroke="#111" stroke-width="1.7" stroke-linecap="round"/></svg>
<svg class="r" style="left:0px;top:0px;" width="1920" height="1020" viewBox="0 0 1920 1020"><path d="M39.4 924.3 L37.6 928.6" stroke="#111" stroke-width="1.7" stroke-linecap="round"/><path d="M43.4 924.3 L41.6 928.6" stroke="#111" stroke-width="1.7" stroke-linecap="round"/><path d="M47.4 924.3 L45.6 928.6" stroke="#111" stroke-width="1.7" stroke-linecap="round"/><path d="M51.4 924.3 L49.6 928.6" stroke="#111" stroke-width="1.7" stroke-linecap="round"/><path d="M55.4 924.3 L53.6 928.6" stroke="#111" stroke-width="1.7" stroke-linecap="round"/></svg>
<svg class="r" style="left:0px;top:0px;" width="1920" height="1020" viewBox="0 0 1920 1020"><path d="M39.4 948.3 L37.6 952.6" stroke="#111" stroke-width="1.7" stroke-linecap="round"/><path d="M43.4 948.3 L41.6 952.6" stroke="#111" stroke-width="1.7" stroke-linecap="round"/><path d="M47.4 948.3 L45.6 952.6" stroke="#111" stroke-width="1.7" stroke-linecap="round"/><path d="M51.4 948.3 L49.6 952.6" stroke="#111" stroke-width="1.7" stroke-linecap="round"/><path d="M55.4 948.3 L53.6 952.6" stroke="#111" stroke-width="1.7" stroke-linecap="round"/></svg>
<svg class="r" style="left:0px;top:0px;" width="1920" height="1020" viewBox="0 0 1920 1020"><rect x="32" y="330" width="403" height="3" fill="#1D6F42"/><rect x="32" y="858" width="403" height="3" fill="#1D6F42"/><rect x="32" y="330" width="3" height="531" fill="#1D6F42"/><rect x="432" y="330" width="3" height="531" fill="#1D6F42"/><rect x="42" y="332" width="2" height="1" fill="#fff"/><rect x="51" y="332" width="2" height="1" fill="#fff"/><rect x="60" y="332" width="2" height="1" fill="#fff"/><rect x="69" y="332" width="2" height="1" fill="#fff"/><rect x="78" y="332" width="2" height="1" fill="#fff"/><rect x="87" y="332" width="2" height="1" fill="#fff"/><rect x="96" y="332" width="2" height="1" fill="#fff"/><rect x="105" y="332" width="2" height="1" fill="#fff"/><rect x="114" y="332" width="2" height="1" fill="#fff"/><rect x="123" y="332" width="2" height="1" fill="#fff"/><rect x="132" y="332" width="2" height="1" fill="#fff"/><rect x="141" y="332" width="2" height="1" fill="#fff"/><rect x="150" y="332" width="2" height="1" fill="#fff"/><rect x="159" y="332" width="2" height="1" fill="#fff"/><rect x="168" y="332" width="2" height="1" fill="#fff"/><rect x="177" y="332" width="2" height="1" fill="#fff"/><rect x="186" y="332" width="2" height="1" fill="#fff"/><rect x="195" y="332" width="2" height="1" fill="#fff"/><rect x="204" y="332" width="2" height="1" fill="#fff"/><rect x="213" y="332" width="2" height="1" fill="#fff"/><rect x="222" y="332" width="2" height="1" fill="#fff"/><rect x="231" y="332" width="2" height="1" fill="#fff"/><rect x="240" y="332" width="2" height="1" fill="#fff"/><rect x="249" y="332" width="2" height="1" fill="#fff"/><rect x="258" y="332" width="2" height="1" fill="#fff"/><rect x="267" y="332" width="2" height="1" fill="#fff"/><rect x="276" y="332" width="2" height="1" fill="#fff"/><rect x="285" y="332" width="2" height="1" fill="#fff"/><rect x="294" y="332" width="2" height="1" fill="#fff"/><rect x="303" y="332" width="2" height="1" fill="#fff"/><rect x="312" y="332" width="2" height="1" fill="#fff"/><rect x="321" y="332" width="2" height="1" fill="#fff"/><rect x="330" y="332" width="2" height="1" fill="#fff"/><rect x="339" y="332" width="2" height="1" fill="#fff"/><rect x="348" y="332" width="2" height="1" fill="#fff"/><rect x="357" y="332" width="2" height="1" fill="#fff"/><rect x="366" y="332" width="2" height="1" fill="#fff"/><rect x="375" y="332" width="2" height="1" fill="#fff"/><rect x="384" y="332" width="2" height="1" fill="#fff"/><rect x="393" y="332" width="2" height="1" fill="#fff"/><rect x="402" y="332" width="2" height="1" fill="#fff"/><rect x="411" y="332" width="2" height="1" fill="#fff"/><rect x="420" y="332" width="2" height="1" fill="#fff"/><rect x="429" y="332" width="2" height="1" fill="#fff"/><rect x="40" y="858" width="2" height="2" fill="#fff"/><rect x="49" y="858" width="2" height="2" fill="#fff"/><rect x="58" y="858" width="2" height="2" fill="#fff"/><rect x="67" y="858" width="2" height="2" fill="#fff"/><rect x="76" y="858" width="2" height="2" fill="#fff"/><rect x="85" y="858" width="2" height="2" fill="#fff"/><rect x="94" y="858" width="2" height="2" fill="#fff"/><rect x="103" y="858" width="2" height="2" fill="#fff"/><rect x="112" y="858" width="2" height="2" fill="#fff"/><rect x="121" y="858" width="2" height="2" fill="#fff"/><rect x="130" y="858" width="2" height="2" fill="#fff"/><rect x="139" y="858" width="2" height="2" fill="#fff"/><rect x="148" y="858" width="2" height="2" fill="#fff"/><rect x="157" y="858" width="2" height="2" fill="#fff"/><rect x="166" y="858" width="2" height="2" fill="#fff"/><rect x="175" y="858" width="2" height="2" fill="#fff"/><rect x="184" y="858" width="2" height="2" fill="#fff"/><rect x="193" y="858" width="2" height="2" fill="#fff"/><rect x="202" y="858" width="2" height="2" fill="#fff"/><rect x="211" y="858" width="2" height="2" fill="#fff"/><rect x="220" y="858" width="2" height="2" fill="#fff"/><rect x="229" y="858" width="2" height="2" fill="#fff"/><rect x="238" y="858" width="2" height="2" fill="#fff"/><rect x="247" y="858" width="2" height="2" fill="#fff"/><rect x="256" y="858" width="2" height="2" fill="#fff"/><rect x="265" y="858" width="2" height="2" fill="#fff"/><rect x="274" y="858" width="2" height="2" fill="#fff"/><rect x="283" y="858" width="2" height="2" fill="#fff"/><rect x="292" y="858" width="2" height="2" fill="#fff"/><rect x="301" y="858" width="2" height="2" fill="#fff"/><rect x="310" y="858" width="2" height="2" fill="#fff"/><rect x="319" y="858" width="2" height="2" fill="#fff"/><rect x="328" y="858" width="2" height="2" fill="#fff"/><rect x="337" y="858" width="2" height="2" fill="#fff"/><rect x="346" y="858" width="2" height="2" fill="#fff"/><rect x="355" y="858" width="2" height="2" fill="#fff"/><rect x="364" y="858" width="2" height="2" fill="#fff"/><rect x="373" y="858" width="2" height="2" fill="#fff"/><rect x="382" y="858" width="2" height="2" fill="#fff"/><rect x="391" y="858" width="2" height="2" fill="#fff"/><rect x="400" y="858" width="2" height="2" fill="#fff"/><rect x="409" y="858" width="2" height="2" fill="#fff"/><rect x="418" y="858" width="2" height="2" fill="#fff"/><rect x="427" y="858" width="2" height="2" fill="#fff"/><rect x="34" y="338" width="1" height="2" fill="#fff"/><rect x="34" y="347" width="1" height="2" fill="#fff"/><rect x="34" y="356" width="1" height="2" fill="#fff"/><rect x="34" y="365" width="1" height="2" fill="#fff"/><rect x="34" y="374" width="1" height="2" fill="#fff"/><rect x="34" y="383" width="1" height="2" fill="#fff"/><rect x="34" y="392" width="1" height="2" fill="#fff"/><rect x="34" y="401" width="1" height="2" fill="#fff"/><rect x="34" y="410" width="1" height="2" fill="#fff"/><rect x="34" y="419" width="1" height="2" fill="#fff"/><rect x="34" y="428" width="1" height="2" fill="#fff"/><rect x="34" y="437" width="1" height="2" fill="#fff"/><rect x="34" y="446" width="1" height="2" fill="#fff"/><rect x="34" y="455" width="1" height="2" fill="#fff"/><rect x="34" y="464" width="1" height="2" fill="#fff"/><rect x="34" y="473" width="1" height="2" fill="#fff"/><rect x="34" y="482" width="1" height="2" fill="#fff"/><rect x="34" y="491" width="1" height="2" fill="#fff"/><rect x="34" y="500" width="1" height="2" fill="#fff"/><rect x="34" y="509" width="1" height="2" fill="#fff"/><rect x="34" y="518" width="1" height="2" fill="#fff"/><rect x="34" y="527" width="1" height="2" fill="#fff"/><rect x="34" y="536" width="1" height="2" fill="#fff"/><rect x="34" y="545" width="1" height="2" fill="#fff"/><rect x="34" y="554" width="1" height="2" fill="#fff"/><rect x="34" y="563" width="1" height="2" fill="#fff"/><rect x="34" y="572" width="1" height="2" fill="#fff"/><rect x="34" y="581" width="1" height="2" fill="#fff"/><rect x="34" y="590" width="1" height="2" fill="#fff"/><rect x="34" y="599" width="1" height="2" fill="#fff"/><rect x="34" y="608" width="1" height="2" fill="#fff"/><rect x="34" y="617" width="1" height="2" fill="#fff"/><rect x="34" y="626" width="1" height="2" fill="#fff"/><rect x="34" y="635" width="1" height="2" fill="#fff"/><rect x="34" y="644" width="1" height="2" fill="#fff"/><rect x="34" y="653" width="1" height="2" fill="#fff"/><rect x="34" y="662" width="1" height="2" fill="#fff"/><rect x="34" y="671" width="1" height="2" fill="#fff"/><rect x="34" y="680" width="1" height="2" fill="#fff"/><rect x="34" y="689" width="1" height="2" fill="#fff"/><rect x="34" y="698" width="1" height="2" fill="#fff"/><rect x="34" y="707" width="1" height="2" fill="#fff"/><rect x="34" y="716" width="1" height="2" fill="#fff"/><rect x="34" y="725" width="1" height="2" fill="#fff"/><rect x="34" y="734" width="1" height="2" fill="#fff"/><rect x="34" y="743" width="1" height="2" fill="#fff"/><rect x="34" y="752" width="1" height="2" fill="#fff"/><rect x="34" y="761" width="1" height="2" fill="#fff"/><rect x="34" y="770" width="1" height="2" fill="#fff"/><rect x="34" y="779" width="1" height="2" fill="#fff"/><rect x="34" y="788" width="1" height="2" fill="#fff"/><rect x="34" y="797" width="1" height="2" fill="#fff"/><rect x="34" y="806" width="1" height="2" fill="#fff"/><rect x="34" y="815" width="1" height="2" fill="#fff"/><rect x="34" y="824" width="1" height="2" fill="#fff"/><rect x="34" y="833" width="1" height="2" fill="#fff"/><rect x="34" y="842" width="1" height="2" fill="#fff"/><rect x="34" y="851" width="1" height="2" fill="#fff"/><rect x="432" y="340" width="2" height="2" fill="#fff"/><rect x="432" y="349" width="2" height="2" fill="#fff"/><rect x="432" y="358" width="2" height="2" fill="#fff"/><rect x="432" y="367" width="2" height="2" fill="#fff"/><rect x="432" y="376" width="2" height="2" fill="#fff"/><rect x="432" y="385" width="2" height="2" fill="#fff"/><rect x="432" y="394" width="2" height="2" fill="#fff"/><rect x="432" y="403" width="2" height="2" fill="#fff"/><rect x="432" y="412" width="2" height="2" fill="#fff"/><rect x="432" y="421" width="2" height="2" fill="#fff"/><rect x="432" y="430" width="2" height="2" fill="#fff"/><rect x="432" y="439" width="2" height="2" fill="#fff"/><rect x="432" y="448" width="2" height="2" fill="#fff"/><rect x="432" y="457" width="2" height="2" fill="#fff"/><rect x="432" y="466" width="2" height="2" fill="#fff"/><rect x="432" y="475" width="2" height="2" fill="#fff"/><rect x="432" y="484" width="2" height="2" fill="#fff"/><rect x="432" y="493" width="2" height="2" fill="#fff"/><rect x="432" y="502" width="2" height="2" fill="#fff"/><rect x="432" y="511" width="2" height="2" fill="#fff"/><rect x="432" y="520" width="2" height="2" fill="#fff"/><rect x="432" y="529" width="2" height="2" fill="#fff"/><rect x="432" y="538" width="2" height="2" fill="#fff"/><rect x="432" y="547" width="2" height="2" fill="#fff"/><rect x="432" y="556" width="2" height="2" fill="#fff"/><rect x="432" y="565" width="2" height="2" fill="#fff"/><rect x="432" y="574" width="2" height="2" fill="#fff"/><rect x="432" y="583" width="2" height="2" fill="#fff"/><rect x="432" y="592" width="2" height="2" fill="#fff"/><rect x="432" y="601" width="2" height="2" fill="#fff"/><rect x="432" y="610" width="2" height="2" fill="#fff"/><rect x="432" y="619" width="2" height="2" fill="#fff"/><rect x="432" y="628" width="2" height="2" fill="#fff"/><rect x="432" y="637" width="2" height="2" fill="#fff"/><rect x="432" y="646" width="2" height="2" fill="#fff"/><rect x="432" y="655" width="2" height="2" fill="#fff"/><rect x="432" y="664" width="2" height="2" fill="#fff"/><rect x="432" y="673" width="2" height="2" fill="#fff"/><rect x="432" y="682" width="2" height="2" fill="#fff"/><rect x="432" y="691" width="2" height="2" fill="#fff"/><rect x="432" y="700" width="2" height="2" fill="#fff"/><rect x="432" y="709" width="2" height="2" fill="#fff"/><rect x="432" y="718" width="2" height="2" fill="#fff"/><rect x="432" y="727" width="2" height="2" fill="#fff"/><rect x="432" y="736" width="2" height="2" fill="#fff"/><rect x="432" y="745" width="2" height="2" fill="#fff"/><rect x="432" y="754" width="2" height="2" fill="#fff"/><rect x="432" y="763" width="2" height="2" fill="#fff"/><rect x="432" y="772" width="2" height="2" fill="#fff"/><rect x="432" y="781" width="2" height="2" fill="#fff"/><rect x="432" y="790" width="2" height="2" fill="#fff"/><rect x="432" y="799" width="2" height="2" fill="#fff"/><rect x="432" y="808" width="2" height="2" fill="#fff"/><rect x="432" y="817" width="2" height="2" fill="#fff"/><rect x="432" y="826" width="2" height="2" fill="#fff"/><rect x="432" y="835" width="2" height="2" fill="#fff"/><rect x="432" y="844" width="2" height="2" fill="#fff"/><rect x="432" y="853" width="2" height="2" fill="#fff"/><rect x="430" y="856" width="7" height="7" fill="#fff"/><rect x="431" y="857" width="5" height="5" fill="#1D6F42"/></svg>
<div class="r" style="left:1897px;top:308px;width:21px;height:648px;background:#F3F3F3;border-radius:10px;"></div>
<svg class="r" style="left:1900px;top:312px;" width="15" height="12" viewBox="0 0 15 12"><path d="M7.3 2 L12.5 10 H2 Z" fill="#6F6F6F" stroke="#6F6F6F" stroke-width="1" stroke-linejoin="round"/></svg>
<div class="r" style="left:1902px;top:329px;width:11px;height:21px;background:#707070;border-radius:5.5px;"></div>
<svg class="r" style="left:1900px;top:939px;" width="15" height="12" viewBox="0 0 15 12"><path d="M2 2 H12.5 L7.3 10 Z" fill="#6F6F6F" stroke="#6F6F6F" stroke-width="1" stroke-linejoin="round"/></svg>
<div class="r" style="left:0px;top:953px;width:1894px;height:12px;background:#FFFFFF;"></div>
<div class="r" style="left:0px;top:953px;width:141px;height:40px;background:#E8E3E4;border-top-right-radius:7px;"></div>
<div class="r" style="left:288px;top:953px;width:1632px;height:40px;background:linear-gradient(90deg,#E8E4E5 0%,#E9E7E8 50%,#EAEAEA 100%);border-top-left-radius:7px;"></div>
<div class="r" style="left:141px;top:953px;width:147px;height:40px;background:#E8E3E4;"></div>
<div class="r" style="left:141px;top:953px;width:147px;height:35px;background:#FFFFFF;border-radius:0 0 7px 7px;"></div>
<svg class="r" style="left:28px;top:963px;" width="14" height="18" viewBox="0 0 14 18"><path d="M10.5 2.5 L4 9 L10.5 15.5" fill="none" stroke="#8A8A8A" stroke-width="1.3"/></svg>
<svg class="r" style="left:70px;top:963px;" width="14" height="18" viewBox="0 0 14 18"><path d="M3.5 2.5 L10 9 L3.5 15.5" fill="none" stroke="#8A8A8A" stroke-width="1.3"/></svg>
<span class="t" style="left:153.70px;top:963px;font-size:17.5px;line-height:17.5px;color:#1F1F1F;font-weight:bold;transform:scaleX(0.9913);">Média de notas</span>
<div class="r" style="left:151px;top:983px;width:127px;height:2.5px;background:#107C41;border-radius:1px;"></div>
<div class="r" style="left:293px;top:961px;width:1px;height:23px;background:#C8C6C6;"></div>
<svg class="r" style="left:343px;top:965px;" width="18" height="16" viewBox="0 0 18 16"><path d="M9.3 1 V14 M2.5 7.5 H16" stroke="#333" stroke-width="1.4"/></svg>
<svg class="r" style="left:1152px;top:964px;" width="8" height="18" viewBox="0 0 8 18"><rect x="2.8" y="2.6" width="2.5" height="2.5" fill="#222"/><rect x="2.8" y="7.6" width="2.5" height="2.5" fill="#222"/><rect x="2.8" y="12.6" width="2.5" height="2.5" fill="#222"/></svg>
<div class="r" style="left:1176px;top:962px;width:721px;height:21px;background:#F3F3F3;border-radius:10.5px;"></div>
<div class="r" style="left:1197px;top:967px;width:649px;height:11px;background:#6F6F6F;border-radius:5.5px;"></div>
<svg class="r" style="left:1180px;top:965px;" width="14" height="15" viewBox="0 0 14 15"><path d="M10.5 2.3 V12.7 L2.5 7.5 Z" fill="#6F6F6F" stroke="#6F6F6F" stroke-width="1" stroke-linejoin="round"/></svg>
<svg class="r" style="left:1880px;top:965px;" width="14" height="15" viewBox="0 0 14 15"><path d="M3 2.3 V12.7 L10.5 7.5 Z" fill="#6F6F6F" stroke="#6F6F6F" stroke-width="1" stroke-linejoin="round"/></svg>
<div class="r" style="left:0px;top:993px;width:1920px;height:1px;background:#D2D0D0;"></div>
<div class="r" style="left:0px;top:994px;width:1920px;height:26px;background:#F3F3F3;"></div>
<span class="t" style="left:14.20px;top:1002px;font-size:12.75px;line-height:12.75px;color:#333;transform:scaleX(1.0159);">Selecione o local de destino e tecle ENTER ou use 'Colar'</span>
<span class="t" style="left:1442.00px;top:1002px;font-size:12.75px;line-height:12.75px;color:#333;">Contagem: 22</span>
<div class="r" style="left:1547px;top:994px;width:50px;height:26px;background:#E0E0E0;"></div>
<svg class="r" style="left:1561px;top:996px;" width="20" height="20" viewBox="0 0 20 20">
      <rect x="2.7" y="2.7" width="15.5" height="15.2" fill="none" stroke="#555" stroke-width="1.6"/>
      <path d="M2.7 7.8 H18.2 M2.7 12.9 H18.2 M7.9 2.7 V17.9 M13 2.7 V17.9" stroke="#555" stroke-width="1.3"/>
    </svg>
<svg class="r" style="left:1611px;top:996px;" width="22" height="20" viewBox="0 0 22 20">
      <rect x="2.6" y="2.6" width="16.6" height="15.4" fill="none" stroke="#555" stroke-width="1.6"/>
      <rect x="6.5" y="5.8" width="8.8" height="9" fill="none" stroke="#555" stroke-width="1.2"/>
      <path d="M8.5 8.5 H13.3 M8.5 10.5 H13.3 M8.5 12.5 H13.3" stroke="#555" stroke-width="0.9"/>
    </svg>
<svg class="r" style="left:1661px;top:996px;" width="22" height="20" viewBox="0 0 22 20">
      <rect x="2.9" y="2.6" width="16.4" height="15.4" fill="none" stroke="#555" stroke-width="1.6"/>
      <path d="M2.9 9.5 H11.2 V2.6 M7 2.6 V9.5" fill="none" stroke="#555" stroke-width="1.4"/>
    </svg>
<div class="r" style="left:1704px;top:1006px;width:9px;height:1.3px;background:#444;"></div>
<div class="r" style="left:1720px;top:1007px;width:125px;height:1.3px;background:#555;"></div>
<div class="r" style="left:1780px;top:1000px;width:6px;height:14px;background:#666;"></div>
<svg class="r" style="left:1847px;top:998px;" width="18" height="18" viewBox="0 0 18 18"><path d="M8.8 2.5 V15.5 M2.3 9 H15.3" stroke="#444" stroke-width="1.2"/></svg>
<span class="t" style="left:1878.00px;top:1001px;font-size:13.0px;line-height:13.0px;color:#333;transform:scaleX(0.8824);">100%</span>
</body></html>
